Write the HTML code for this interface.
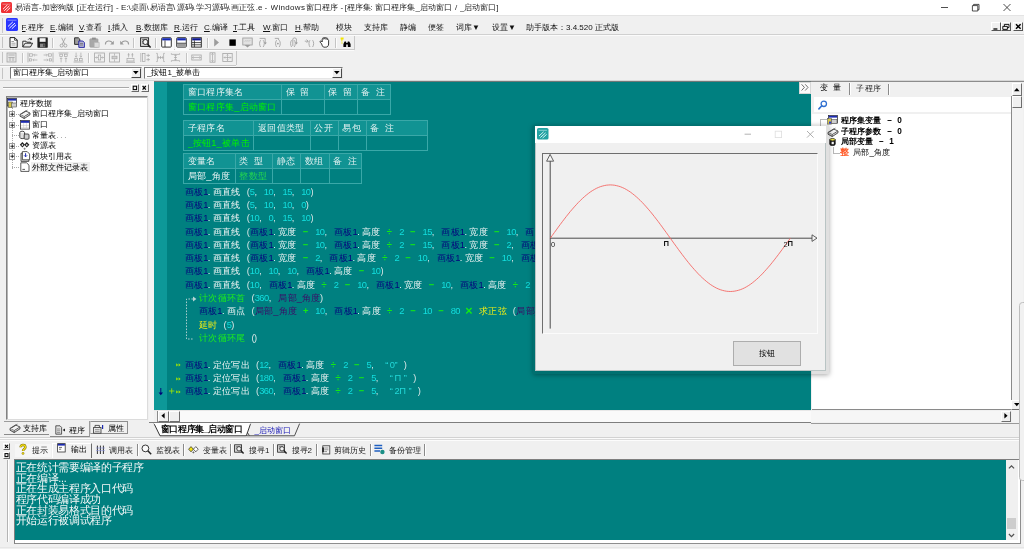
<!DOCTYPE html>
<html>
<head>
<meta charset="utf-8">
<title>E IDE</title>
<style>
html,body{margin:0;padding:0;}
body{width:1024px;height:549px;overflow:hidden;position:relative;background:#f0f0f0;font-family:"Liberation Sans",sans-serif;font-size:8px;color:#000;}
body div,body svg{position:absolute;box-sizing:border-box;}
.t{white-space:nowrap;overflow:hidden;}
.c{white-space:pre;overflow:hidden;font-size:9.33px;line-height:13px;height:13px;}
.n{letter-spacing:-0.52px;}
.o{text-align:center;font-weight:bold;}
i{display:inline-block;width:1em;text-align:center;font-style:normal;}
svg{overflow:visible;}
#root{left:0;top:0;width:1024px;height:549px;overflow:hidden;will-change:transform;}
</style>
</head>
<body>
<div id="root">
<div style="left:0px;top:0px;width:1024px;height:15px;background:#ffffff;"></div>
<svg style="left:1px;top:2px;" width="11" height="11" viewBox="0 0 11 11"><rect x="0" y="0" width="11" height="11" rx="1.6" fill="#ee3236"/><path d="M2 7.2L6.5 2.8M3.2 8.8L8.4 3.8M5.4 9.3L9.2 5.6" stroke="#fff" stroke-width="0.9" fill="none"/><path d="M1.5 2.2H9.5" stroke="#f7a0a2" stroke-width="0.7"/></svg>
<div class="t" style="left:15px;top:1.0px;font-size:8px;line-height:13px;height:13px;color:#1a1a1a;width:60px;"><i>易</i><i>语</i><i>言</i>-<i>加</i><i>密</i><i>狗</i><i>版</i></div>
<div class="t" style="left:76.4px;top:1.0px;font-size:8px;line-height:13px;height:13px;color:#1a1a1a;width:38px;">[<i>正</i><i>在</i><i>运</i><i>行</i>]</div>
<div class="t" style="left:116px;top:1.0px;font-size:8px;line-height:13px;height:13px;color:#1a1a1a;width:4px;">-</div>
<div class="t" style="left:121px;top:1.0px;font-size:8px;line-height:13px;height:13px;color:#1a1a1a;width:11px;">E:\</div>
<div class="t" style="left:131.2px;top:1.0px;font-size:8px;line-height:13px;height:13px;color:#1a1a1a;width:17px;"><i>桌</i><i>面</i></div>
<div class="t" style="left:146.6px;top:1.0px;font-size:8px;line-height:13px;height:13px;color:#1a1a1a;width:4px;">\</div>
<div class="t" style="left:150.2px;top:1.0px;font-size:8px;line-height:13px;height:13px;color:#1a1a1a;width:25px;"><i>易</i><i>语</i><i>言</i></div>
<div class="t" style="left:173px;top:1.0px;font-size:8px;line-height:13px;height:13px;color:#1a1a1a;width:4px;">\</div>
<div class="t" style="left:176.6px;top:1.0px;font-size:8px;line-height:13px;height:13px;color:#1a1a1a;width:17px;"><i>源</i><i>码</i></div>
<div class="t" style="left:192.3px;top:1.0px;font-size:8px;line-height:13px;height:13px;color:#1a1a1a;width:4px;">\</div>
<div class="t" style="left:196.2px;top:1.0px;font-size:8px;line-height:13px;height:13px;color:#1a1a1a;width:33px;"><i>学</i><i>习</i><i>源</i><i>码</i></div>
<div class="t" style="left:227.6px;top:1.0px;font-size:8px;line-height:13px;height:13px;color:#1a1a1a;width:4px;">\</div>
<div class="t" style="left:231.4px;top:1.0px;font-size:8px;line-height:13px;height:13px;color:#1a1a1a;width:25px;"><i>画</i><i>正</i><i>弦</i></div>
<div class="t" style="left:255.8px;top:1.0px;font-size:8px;line-height:13px;height:13px;color:#1a1a1a;width:7px;">.e</div>
<div class="t" style="left:264.6px;top:1.0px;font-size:8px;line-height:13px;height:13px;color:#1a1a1a;width:4px;">-</div>
<div class="t" style="left:270.5px;top:1.0px;font-size:8px;line-height:13px;height:13px;color:#1a1a1a;width:36px;letter-spacing:0.33px;">Windows</div>
<div class="t" style="left:306px;top:1.0px;font-size:8px;line-height:13px;height:13px;color:#1a1a1a;width:33px;"><i>窗</i><i>口</i><i>程</i><i>序</i></div>
<div class="t" style="left:340.4px;top:1.0px;font-size:8px;line-height:13px;height:13px;color:#1a1a1a;width:4px;">-</div>
<div class="t" style="left:344.8px;top:1.0px;font-size:8px;line-height:13px;height:13px;color:#1a1a1a;width:3px;">[</div>
<div class="t" style="left:346.9px;top:1.0px;font-size:8px;line-height:13px;height:13px;color:#1a1a1a;width:25px;"><i>程</i><i>序</i><i>集</i></div>
<div class="t" style="left:370.6px;top:1.0px;font-size:8px;line-height:13px;height:13px;color:#1a1a1a;width:3px;">:</div>
<div class="t" style="left:375.4px;top:1.0px;font-size:8px;line-height:13px;height:13px;color:#1a1a1a;width:78px;"><i>窗</i><i>口</i><i>程</i><i>序</i><i>集</i>_<i>启</i><i>动</i><i>窗</i><i>口</i></div>
<div class="t" style="left:455px;top:1.0px;font-size:8px;line-height:13px;height:13px;color:#1a1a1a;width:4px;">/</div>
<div class="t" style="left:459.8px;top:1.0px;font-size:8px;line-height:13px;height:13px;color:#1a1a1a;width:40px;">_<i>启</i><i>动</i><i>窗</i><i>口</i>]</div>
<svg style="left:940px;top:3px;" width="80" height="10" viewBox="0 0 80 10"><path d="M1 4.5H8" stroke="#222" stroke-width="0.8"/><path d="M32.4 2.6H37.8V8H32.4Z M33.6 2.6V1.4H39V6.8H37.8" stroke="#222" stroke-width="0.8" fill="none" stroke-linejoin="round"/><path d="M63.5 1L70.5 8M70.5 1L63.5 8" stroke="#222" stroke-width="0.8"/></svg>
<div style="left:0px;top:15px;width:1024px;height:1px;background:#e4e4e4;"></div>
<div style="left:2px;top:18px;width:1px;height:15px;background:#c8c8c8;"></div>
<svg style="left:6px;top:18px;" width="12" height="13" viewBox="0 0 12 13"><rect x="0" y="0" width="12" height="13" rx="1.6" fill="#2a36ff"/><path d="M1.5 2.2H10.5" stroke="#9aa2ff" stroke-width="0.8"/><path d="M2 8.5L6.8 3.9M3.4 10.2L9 5M5.8 10.8L10 6.8" stroke="#fff" stroke-width="0.95" fill="none"/></svg>
<div class="t" style="left:21.5px;top:20.5px;font-size:8px;line-height:13px;height:13px;color:#111;width:23px;"><u>F</u>.<i>程</i><i>序</i></div>
<div class="t" style="left:50px;top:20.5px;font-size:8px;line-height:13px;height:13px;color:#111;width:23px;"><u>E</u>.<i>编</i><i>辑</i></div>
<div class="t" style="left:79px;top:20.5px;font-size:8px;line-height:13px;height:13px;color:#111;width:24px;"><u>V</u>.<i>查</i><i>看</i></div>
<div class="t" style="left:108px;top:20.5px;font-size:8px;line-height:13px;height:13px;color:#111;width:22px;"><u>I</u>.<i>插</i><i>入</i></div>
<div class="t" style="left:136px;top:20.5px;font-size:8px;line-height:13px;height:13px;color:#111;width:32.5px;"><u>B</u>.<i>数</i><i>据</i><i>库</i></div>
<div class="t" style="left:174px;top:20.5px;font-size:8px;line-height:13px;height:13px;color:#111;width:24px;"><u>R</u>.<i>运</i><i>行</i></div>
<div class="t" style="left:204px;top:20.5px;font-size:8px;line-height:13px;height:13px;color:#111;width:24px;"><u>C</u>.<i>编</i><i>译</i></div>
<div class="t" style="left:233px;top:20.5px;font-size:8px;line-height:13px;height:13px;color:#111;width:24px;"><u>T</u>.<i>工</i><i>具</i></div>
<div class="t" style="left:263px;top:20.5px;font-size:8px;line-height:13px;height:13px;color:#111;width:26.5px;"><u>W</u>.<i>窗</i><i>口</i></div>
<div class="t" style="left:295px;top:20.5px;font-size:8px;line-height:13px;height:13px;color:#111;width:25px;"><u>H</u>.<i>帮</i><i>助</i></div>
<div class="t" style="left:336px;top:20.5px;font-size:8px;line-height:13px;height:13px;color:#111;width:17px;"><i>模</i><i>块</i></div>
<div class="t" style="left:364px;top:20.5px;font-size:8px;line-height:13px;height:13px;color:#111;width:25px;"><i>支</i><i>持</i><i>库</i></div>
<div class="t" style="left:400px;top:20.5px;font-size:8px;line-height:13px;height:13px;color:#111;width:17px;"><i>静</i><i>编</i></div>
<div class="t" style="left:428px;top:20.5px;font-size:8px;line-height:13px;height:13px;color:#111;width:17px;"><i>便</i><i>签</i></div>
<div class="t" style="left:456px;top:20.5px;font-size:8px;line-height:13px;height:13px;color:#111;width:24px;"><i>词</i><i>库</i>▼</div>
<div class="t" style="left:492px;top:20.5px;font-size:8px;line-height:13px;height:13px;color:#111;width:24px;"><i>设</i><i>置</i>▼</div>
<div class="t" style="left:526px;top:20.5px;font-size:8px;line-height:13px;height:13px;color:#111;width:95px;"><i>助</i><i>手</i><i>版</i><i>本</i><i>：</i>3.4.520 <i>正</i><i>式</i><i>版</i></div>
<div style="left:991px;top:22.3px;width:9.9px;height:9.2px;background:#f0f0f0;border:0.6px solid #fff;border-right-color:#555;border-bottom-color:#555;"></div>
<div style="left:1001.2px;top:22.3px;width:9.9px;height:9.2px;background:#f0f0f0;border:0.6px solid #fff;border-right-color:#555;border-bottom-color:#555;"></div>
<div style="left:1013.4px;top:22.3px;width:9.9px;height:9.2px;background:#f0f0f0;border:0.6px solid #fff;border-right-color:#555;border-bottom-color:#555;"></div>
<svg style="left:991px;top:22.3px;" width="33" height="9" viewBox="0 0 33 9"><path d="M2.4 7H6.4" stroke="#000" stroke-width="1.3"/><path d="M11.8 4.4H16.4V7.4H11.8Z M13.4 4.2V2.4H18V5.6H16.6" stroke="#000" stroke-width="0.9" fill="none"/><path d="M25 2.2L29.6 6.8M29.6 2.2L25 6.8" stroke="#000" stroke-width="1.5"/></svg>
<div style="left:0px;top:34px;width:1024px;height:1px;background:#d0d0d0;"></div>
<div style="left:0px;top:35px;width:1024px;height:1px;background:#fbfbfb;"></div>
<div style="left:2px;top:37px;width:1px;height:11px;background:#c4c4c4;"></div>
<div style="left:0px;top:49px;width:354px;height:1px;background:#c8c8c8;"></div>
<div style="left:0px;top:50px;width:354px;height:1px;background:#fbfbfb;"></div>
<div style="left:353.5px;top:36px;width:1px;height:14px;background:#c8c8c8;"></div>
<div style="left:51.5px;top:37.5px;width:1px;height:10.5px;background:#c4c4c4;"></div>
<div style="left:52.5px;top:37.5px;width:1px;height:10.5px;background:#fcfcfc;"></div>
<div style="left:133px;top:37.5px;width:1px;height:10.5px;background:#c4c4c4;"></div>
<div style="left:134px;top:37.5px;width:1px;height:10.5px;background:#fcfcfc;"></div>
<div style="left:155px;top:37.5px;width:1px;height:10.5px;background:#c4c4c4;"></div>
<div style="left:156px;top:37.5px;width:1px;height:10.5px;background:#fcfcfc;"></div>
<div style="left:206.5px;top:37.5px;width:1px;height:10.5px;background:#c4c4c4;"></div>
<div style="left:207.5px;top:37.5px;width:1px;height:10.5px;background:#fcfcfc;"></div>
<div style="left:334.5px;top:37.5px;width:1px;height:10.5px;background:#c4c4c4;"></div>
<div style="left:335.5px;top:37.5px;width:1px;height:10.5px;background:#fcfcfc;"></div>
<div style="left:159.5px;top:36.5px;width:14.5px;height:13px;background:#fafafa;"></div>
<div style="left:174.5px;top:36.5px;width:14.5px;height:13px;background:#fafafa;"></div>
<svg style="left:8.0px;top:37.0px;" width="11" height="11" viewBox="0 0 11 11"><path d="M2 .6H6.8L9.2 3V10.4H2Z" fill="#fff" stroke="#1e1e1e" stroke-width="1"/><path d="M6.6 .6V3.2H9.2" fill="none" stroke="#1e1e1e" stroke-width=".8"/><path d="M3.4 4.5H6M3.4 6.2H7.6M3.4 8H7.6" stroke="#777" stroke-width=".7"/></svg>
<svg style="left:22.0px;top:37.0px;" width="11" height="11" viewBox="0 0 11 11"><path d="M.8 10V4.2H4L4.8 5.2H8.4V6.2" fill="#fff" stroke="#1e1e1e" stroke-width=".9"/><path d="M.8 10L3 6.2H10.6L8.4 10Z" fill="#e8e8e8" stroke="#1e1e1e" stroke-width=".9"/><path d="M6.2 2.6C7 1.2 8.4 1.2 9.4 2.2M9.6 .8V2.6H7.9" fill="none" stroke="#1e1e1e" stroke-width=".8"/></svg>
<svg style="left:37.0px;top:37.0px;" width="11" height="11" viewBox="0 0 11 11"><rect x=".8" y=".8" width="9.6" height="9.6" fill="#222" stroke="#1e1e1e" stroke-width=".6"/><rect x="2.6" y="1.2" width="6" height="3.6" fill="#f4f4f4"/><rect x="3" y="6.6" width="5.2" height="3.6" fill="#888"/><rect x="6.4" y="7.2" width="1.1" height="2.4" fill="#222"/></svg>
<svg style="left:58.0px;top:37.0px;" width="11" height="11" viewBox="0 0 11 11"><path d="M3.6 .8L6.6 7M7.4 .8L4.4 7" stroke="#9a9a9a" stroke-width=".8" fill="none"/><circle cx="3.6" cy="8.6" r="1.5" fill="none" stroke="#9a9a9a" stroke-width=".8"/><circle cx="7.4" cy="8.6" r="1.5" fill="none" stroke="#9a9a9a" stroke-width=".8"/></svg>
<svg style="left:73.5px;top:37.0px;" width="11" height="11" viewBox="0 0 11 11"><path d="M.6 .8H4.4L5.8 2.2V7.4H.6Z" fill="#9c9c9c" stroke="#1e1e1e" stroke-width=".9"/><path d="M4.8 4H8.8L10.4 5.6V10.4H4.8Z" fill="#b9b9d8" stroke="#1c1ca0" stroke-width=".9"/><path d="M6 6.4H9M6 8H9" stroke="#444" stroke-width=".6"/></svg>
<svg style="left:89.0px;top:37.0px;" width="11" height="11" viewBox="0 0 11 11"><rect x=".8" y="1.8" width="8.2" height="8.4" rx=".8" fill="#a8a8a8" stroke="#9a9a9a" stroke-width=".6"/><rect x="3" y=".6" width="3.8" height="2" fill="#8f8f8f"/><path d="M5.2 5.4H10.2V10.4H5.2Z" fill="#dcdcdc" stroke="#b0b0b0" stroke-width=".6"/></svg>
<svg style="left:104.0px;top:37.0px;" width="11" height="11" viewBox="0 0 11 11"><path d="M1.4 7.4C1.4 3.4 6.6 3 8.6 6" fill="none" stroke="#9a9a9a" stroke-width="1.1"/><path d="M9.8 3.8V7.4H6.2Z" fill="#9a9a9a"/></svg>
<svg style="left:119.0px;top:37.0px;" width="11" height="11" viewBox="0 0 11 11"><path d="M9.6 7.4C9.6 3.4 4.4 3 2.4 6" fill="none" stroke="#9a9a9a" stroke-width="1.1"/><path d="M1.2 3.8V7.4H4.8Z" fill="#9a9a9a"/></svg>
<svg style="left:139.5px;top:37.0px;" width="11" height="11" viewBox="0 0 11 11"><rect x=".6" y=".8" width="8" height="8.6" fill="#d6d6d6" stroke="#1e1e1e" stroke-width=".9"/><path d="M2 2.6H7M2 4.4H7M2 6.2H7" stroke="#555" stroke-width=".7"/><circle cx="5.4" cy="5" r="2.5" fill="#f3f3f3" stroke="#1e1e1e" stroke-width=".9"/><path d="M7.4 7L10.6 10.4" stroke="#1e1e1e" stroke-width="1.5"/></svg>
<svg style="left:161.0px;top:37.2px;" width="11" height="11" viewBox="0 0 11 11"><rect x=".7" y=".7" width="9.6" height="9.4" rx=".8" fill="#fff" stroke="#1e1e1e" stroke-width=".9"/><rect x="1.2" y="1.2" width="8.6" height="2.2" fill="#1428b4"/><path d="M4 3.4V10" stroke="#1e1e1e" stroke-width=".8"/></svg>
<svg style="left:176.0px;top:37.2px;" width="11" height="11" viewBox="0 0 11 11"><rect x=".7" y=".7" width="9.6" height="9.4" rx=".8" fill="#fff" stroke="#1e1e1e" stroke-width=".9"/><rect x="1.2" y="1.2" width="8.6" height="2.2" fill="#1428b4"/><rect x="1.2" y="6.4" width="8.6" height="3.2" fill="#9c9c9c"/><path d="M1 6.2H10" stroke="#1e1e1e" stroke-width=".7"/></svg>
<svg style="left:191.0px;top:37.0px;" width="11" height="11" viewBox="0 0 11 11"><rect x=".7" y=".7" width="9.6" height="9.4" fill="#fff" stroke="#1e1e1e" stroke-width=".9"/><rect x="1.2" y="1.2" width="8.6" height="2.2" fill="#0c1690"/><path d="M3.4 3.4V10M1 5.6H10M1 7.8H10" stroke="#1e1e1e" stroke-width=".8"/></svg>
<svg style="left:211.0px;top:37.0px;" width="11" height="11" viewBox="0 0 11 11"><path d="M3.2 1.4L8 5.5L3.2 9.6Z" fill="#9c9c9c"/></svg>
<svg style="left:226.5px;top:37.0px;" width="11" height="11" viewBox="0 0 11 11"><rect x="2.4" y="2.4" width="6.4" height="6.4" fill="#000"/></svg>
<svg style="left:242.0px;top:37.0px;" width="11" height="11" viewBox="0 0 11 11"><rect x=".8" y="1" width="9.4" height="7" fill="#e2e2e2" stroke="#9a9a9a" stroke-width=".8"/><path d="M3 4.4L4 3.4M5 4.4L6 3.4M7 4.4L8 3.4" stroke="#9a9a9a" stroke-width=".7"/><path d="M2.6 8L5.5 10.6L8.4 8Z" fill="#9a9a9a"/></svg>
<svg style="left:257.0px;top:37.0px;" width="11" height="11" viewBox="0 0 11 11"><path d="M3.6 3.2C2.2 5 2.2 8 3.6 10M6.2 3.2C7.6 5 7.6 8 6.2 10" fill="none" stroke="#9a9a9a" stroke-width=".8"/><path d="M2.6 1.4H8.2V6" fill="none" stroke="#9a9a9a" stroke-width=".8"/><path d="M6.8 5.4H9.8L8.3 7.6Z" fill="#9a9a9a"/></svg>
<svg style="left:272.5px;top:37.0px;" width="11" height="11" viewBox="0 0 11 11"><path d="M3.6 3.2C2.2 5 2.2 8 3.6 10M6.2 3.2C7.6 5 7.6 8 6.2 10" fill="none" stroke="#9a9a9a" stroke-width=".8"/><path d="M1.8 1.4H5.6V3" fill="none" stroke="#9a9a9a" stroke-width=".8"/><circle cx="4.9" cy="6.6" r=".9" fill="#9a9a9a"/></svg>
<svg style="left:288.0px;top:37.0px;" width="11" height="11" viewBox="0 0 11 11"><path d="M3.6 3.2C2.2 5 2.2 8 3.6 10M6.2 3.2C7.6 5 7.6 8 6.2 10" fill="none" stroke="#9a9a9a" stroke-width=".8"/><path d="M4.8 9V2C4.8 .6 8.4 .6 8.4 2V6" fill="none" stroke="#9a9a9a" stroke-width=".8"/><path d="M6.9 5.4H9.9L8.4 7.6Z" fill="#9a9a9a"/></svg>
<svg style="left:303.5px;top:37.0px;" width="11" height="11" viewBox="0 0 11 11"><path d="M6 3.2C4.6 5 4.6 8 6 10M8.6 3.2C10 5 10 8 8.6 10" fill="none" stroke="#9a9a9a" stroke-width=".8"/><path d="M.8 4.2H4.2M2.6 2.6L4.2 4.2L2.6 5.8" fill="none" stroke="#9a9a9a" stroke-width=".8"/></svg>
<svg style="left:319.0px;top:37.0px;" width="11" height="11" viewBox="0 0 11 11"><path d="M2.6 6.8L1.2 5.2C.6 4.4 1.6 3.6 2.4 4.2L3.2 5V2.4C3.2 1.4 4.4 1.4 4.6 2.2C4.8 1 6.2 1 6.4 2.2C6.8 1.2 8 1.4 8 2.6C8.6 2 9.6 2.4 9.6 3.4V7C9.6 9 8.4 10.2 6.4 10.2H5.2C3.8 10.2 3.2 8.8 2.6 6.8Z" fill="#fff" stroke="#1e1e1e" stroke-width=".9"/><path d="M3.4 1.8C4.6 .2 7.8 .2 8.8 2" fill="none" stroke="#666" stroke-width="1.4"/></svg>
<svg style="left:339.7px;top:37.3px;" width="11" height="11" viewBox="0 0 11 11"><path d="M.6 .6H3.6V2.6H2.4V4.4H1.4V2.6H.6Z" fill="#f2e500"/><rect x="1.4" y="5.4" width="1.2" height="1.2" fill="#f2e500"/><path d="M3.4 10V7L4.6 4.4H6L6.4 6H7.4L7.8 4.4H9.2L10.6 7V10H7.8V7.6H6.2V10Z" fill="#000"/></svg>
<div style="left:2px;top:52px;width:1px;height:11px;background:#c4c4c4;"></div>
<div style="left:0px;top:64.5px;width:236px;height:1px;background:#c8c8c8;"></div>
<div style="left:0px;top:65.5px;width:236px;height:1px;background:#fbfbfb;"></div>
<div style="left:235.5px;top:51px;width:1px;height:14px;background:#c8c8c8;"></div>
<div style="left:21.5px;top:52.5px;width:1px;height:10.5px;background:#c4c4c4;"></div>
<div style="left:22.5px;top:52.5px;width:1px;height:10.5px;background:#fcfcfc;"></div>
<div style="left:88px;top:52.5px;width:1px;height:10.5px;background:#c4c4c4;"></div>
<div style="left:89px;top:52.5px;width:1px;height:10.5px;background:#fcfcfc;"></div>
<div style="left:186px;top:52.5px;width:1px;height:10.5px;background:#c4c4c4;"></div>
<div style="left:187px;top:52.5px;width:1px;height:10.5px;background:#fcfcfc;"></div>
<svg style="left:5.5px;top:52.0px;" width="11" height="11" viewBox="0 0 11 11"><rect x="1" y="1" width="9" height="9" fill="#e4e4e4" stroke="#a6a6a6" stroke-width=".8"/><path d="M2.4 3H8.6M2.4 5.5H8.6M4 5.5V9M7 5.5V9" stroke="#a6a6a6" stroke-width=".8"/></svg>
<svg style="left:26.5px;top:52.0px;" width="11" height="11" viewBox="0 0 11 11"><path d="M1 .6V10.4" stroke="#a6a6a6" stroke-width=".8"/><rect x="2.4" y="1.8" width="3" height="2.4" fill="none" stroke="#a6a6a6" stroke-width=".7"/><rect x="2.4" y="6.8" width="2.2" height="2.2" fill="none" stroke="#a6a6a6" stroke-width=".7"/><path d="M10.4 3H6.6M7.8 1.8L6.6 3L7.8 4.2M10.4 8H5.8M7 6.8L5.8 8L7 9.2" stroke="#a6a6a6" stroke-width=".7" fill="none"/></svg>
<svg style="left:42.5px;top:52.0px;" width="11" height="11" viewBox="0 0 11 11"><path d="M10 .6V10.4" stroke="#a6a6a6" stroke-width=".8"/><rect x="5.6" y="1.8" width="3" height="2.4" fill="none" stroke="#a6a6a6" stroke-width=".7"/><rect x="6.4" y="6.8" width="2.2" height="2.2" fill="none" stroke="#a6a6a6" stroke-width=".7"/><path d="M.6 3H4.4M3.2 1.8L4.4 3L3.2 4.2M.6 8H5.2M4 6.8L5.2 8L4 9.2" stroke="#a6a6a6" stroke-width=".7" fill="none"/></svg>
<svg style="left:58.0px;top:52.0px;" width="11" height="11" viewBox="0 0 11 11"><path d="M.6 1H10.4" stroke="#a6a6a6" stroke-width=".8"/><rect x="1.8" y="2.2" width="2.6" height="2.4" fill="none" stroke="#a6a6a6" stroke-width=".7"/><rect x="6.6" y="2.2" width="2.6" height="2.4" fill="none" stroke="#a6a6a6" stroke-width=".7"/><path d="M3.1 10.4V5.8M1.9 7L3.1 5.8L4.3 7M7.9 10.4V5.8M6.7 7L7.9 5.8L9.1 7" stroke="#a6a6a6" stroke-width=".7" fill="none"/></svg>
<svg style="left:73.0px;top:52.0px;" width="11" height="11" viewBox="0 0 11 11"><path d="M.6 10H10.4" stroke="#a6a6a6" stroke-width=".8"/><rect x="1.8" y="6.4" width="2.6" height="2.4" fill="none" stroke="#a6a6a6" stroke-width=".7"/><rect x="6.6" y="6.4" width="2.6" height="2.4" fill="none" stroke="#a6a6a6" stroke-width=".7"/><path d="M3.1 .6V5.2M1.9 4L3.1 5.2L4.3 4M7.9 .6V5.2M6.7 4L7.9 5.2L9.1 4" stroke="#a6a6a6" stroke-width=".7" fill="none"/></svg>
<svg style="left:94.0px;top:52.0px;" width="11" height="11" viewBox="0 0 11 11"><rect x=".6" y="1" width="9.8" height="9" fill="none" stroke="#a6a6a6" stroke-width=".8"/><rect x="4.3" y="3" width="2.4" height="5" fill="none" stroke="#a6a6a6" stroke-width=".7"/><path d="M1 5.5H3.6M2.6 4.5L3.6 5.5L2.6 6.5M10 5.5H7.4M8.4 4.5L7.4 5.5L8.4 6.5" stroke="#a6a6a6" stroke-width=".7" fill="none"/></svg>
<svg style="left:109.0px;top:52.0px;" width="11" height="11" viewBox="0 0 11 11"><rect x=".6" y="1" width="9.8" height="9" fill="none" stroke="#a6a6a6" stroke-width=".8"/><rect x="3" y="4.2" width="5" height="2.6" fill="#d0d0d0" stroke="#a6a6a6" stroke-width=".7"/><path d="M5.5 1.4V3.6M5.5 9.6V7.4" stroke="#a6a6a6" stroke-width=".7" fill="none"/></svg>
<svg style="left:124.5px;top:52.0px;" width="11" height="11" viewBox="0 0 11 11"><path d="M1 10.2H10" stroke="#a6a6a6" stroke-width=".9"/><rect x="2" y="6.4" width="7" height="2.6" fill="none" stroke="#a6a6a6" stroke-width=".7"/><path d="M3.6 1V5.4M7.4 1V5.4M2.6 2.8H4.6M6.4 2.8H8.4" stroke="#a6a6a6" stroke-width=".7"/></svg>
<svg style="left:139.5px;top:52.0px;" width="11" height="11" viewBox="0 0 11 11"><rect x="2.4" y="1.6" width="2.6" height="8" fill="none" stroke="#a6a6a6" stroke-width=".7"/><path d="M.8 1V10M6.4 3.4H10M8.2 1.8V5M6.4 7.6H10M8.2 6V9.2" stroke="#a6a6a6" stroke-width=".7"/></svg>
<svg style="left:155.0px;top:52.0px;" width="11" height="11" viewBox="0 0 11 11"><path d="M1.2 1.4H2.4V9.6H1.2M9.8 1.4H8.6V9.6H9.8M2.8 5.5H8.2M4 4.4L2.8 5.5L4 6.6M7 4.4L8.2 5.5L7 6.6M5.5 4V7" stroke="#a6a6a6" stroke-width=".7" fill="none"/></svg>
<svg style="left:170.0px;top:52.0px;" width="11" height="11" viewBox="0 0 11 11"><path d="M1.4 1.2V2.4H9.6V1.2M1.4 9.8V8.6H9.6V9.8M5.5 2.8V8.2M4.4 4L5.5 2.8L6.6 4M4.4 7L5.5 8.2L6.6 7M4 5.5H7" stroke="#a6a6a6" stroke-width=".7" fill="none"/></svg>
<svg style="left:191.0px;top:52.0px;" width="11" height="11" viewBox="0 0 11 11"><rect x=".8" y="3" width="9.4" height="5" fill="none" stroke="#a6a6a6" stroke-width=".8"/><path d="M1.4 5.5H9.6M2.6 4.4L1.4 5.5L2.6 6.6M8.4 4.4L9.6 5.5L8.4 6.6" stroke="#a6a6a6" stroke-width=".7" fill="none"/></svg>
<svg style="left:206.5px;top:52.0px;" width="11" height="11" viewBox="0 0 11 11"><rect x="3" y=".8" width="5" height="9.4" fill="none" stroke="#a6a6a6" stroke-width=".8"/><path d="M5.5 1.4V9.6M4.4 2.6L5.5 1.4L6.6 2.6M4.4 8.4L5.5 9.6L6.6 8.4" stroke="#a6a6a6" stroke-width=".7" fill="none"/></svg>
<svg style="left:222.0px;top:52.0px;" width="11" height="11" viewBox="0 0 11 11"><rect x=".8" y="1.4" width="9.4" height="8.2" fill="none" stroke="#a6a6a6" stroke-width=".8"/><path d="M2 5.5H9M3 4.5L2 5.5L3 6.5M8 4.5L9 5.5L8 6.5M5.5 2.4V8.6M4.5 3.4L5.5 2.4L6.5 3.4M4.5 7.6L5.5 8.6L6.5 7.6" stroke="#a6a6a6" stroke-width=".7" fill="none"/></svg>
<div style="left:2px;top:67.5px;width:1px;height:11px;background:#c4c4c4;"></div>
<div style="left:9.5px;top:66.5px;width:132.5px;height:12.5px;background:#ffffff;border:1px solid #7a7a7a;border-right-color:#e6e6e6;border-bottom-color:#e6e6e6;"></div>
<div style="left:130.5px;top:67.5px;width:10.5px;height:10.5px;background:#efefef;border:0.7px solid #fff;border-right-color:#4a4a4a;border-bottom-color:#4a4a4a;"></div>
<svg style="left:132.9px;top:71.3px;" width="6" height="4" viewBox="0 0 6 4"><path d="M0 0H5.6L2.8 3.2Z" fill="#000"/></svg>
<div class="t" style="left:12.5px;top:66.3px;font-size:8px;line-height:13px;height:13px;color:#000;width:116.5px;"><i>窗</i><i>口</i><i>程</i><i>序</i><i>集</i>_<i>启</i><i>动</i><i>窗</i><i>口</i></div>
<div style="left:144px;top:66.5px;width:199px;height:12.5px;background:#ffffff;border:1px solid #7a7a7a;border-right-color:#e6e6e6;border-bottom-color:#e6e6e6;"></div>
<div style="left:331.5px;top:67.5px;width:10.5px;height:10.5px;background:#efefef;border:0.7px solid #fff;border-right-color:#4a4a4a;border-bottom-color:#4a4a4a;"></div>
<svg style="left:333.9px;top:71.3px;" width="6" height="4" viewBox="0 0 6 4"><path d="M0 0H5.6L2.8 3.2Z" fill="#000"/></svg>
<div class="t" style="left:147px;top:66.3px;font-size:8px;line-height:13px;height:13px;color:#000;width:183px;">_<i>按</i><i>钮</i>1_<i>被</i><i>单</i><i>击</i></div>
<div style="left:0px;top:79.5px;width:1024px;height:1px;background:#d6d6d6;"></div>
<div style="left:3px;top:86.5px;width:126px;height:1px;background:#a8a8a8;"></div>
<div style="left:3px;top:87.5px;width:126px;height:1px;background:#ffffff;"></div>
<div style="left:131px;top:83.5px;width:8px;height:8px;background:#f0f0f0;border:0.6px solid #fff;border-right-color:#6a6a6a;border-bottom-color:#6a6a6a;"></div>
<div style="left:140.5px;top:83.5px;width:8px;height:8px;background:#f0f0f0;border:0.6px solid #fff;border-right-color:#6a6a6a;border-bottom-color:#6a6a6a;"></div>
<svg style="left:131px;top:83.5px;" width="18" height="8" viewBox="0 0 18 8"><rect x="2.2" y="2.2" width="3.4" height="3.4" fill="none" stroke="#000" stroke-width="1"/><path d="M11.6 2L14.8 5.6M14.8 2L11.6 5.6" stroke="#000" stroke-width="1.2"/></svg>
<div style="left:5.5px;top:96px;width:142.5px;height:324px;background:#ffffff;border:1px solid #828282;border-right-color:#dcdcdc;border-bottom-color:#dcdcdc;"></div>
<div style="left:6.5px;top:97px;width:140.5px;height:1px;background:#b4b4b4;"></div>
<div style="left:6.5px;top:97px;width:1px;height:322px;background:#b4b4b4;"></div>
<div style="left:148.5px;top:80.5px;width:5px;height:342px;background:#f4f4f4;"></div>
<div style="left:11.8px;top:106px;width:1px;height:63px;border-left:1px dotted #a8a8a8;"></div>
<div style="left:12.3px;top:113.5px;width:7px;height:1px;border-top:1px dotted #a8a8a8;"></div>
<div style="left:12.3px;top:124.5px;width:7px;height:1px;border-top:1px dotted #a8a8a8;"></div>
<div style="left:12.3px;top:135px;width:7px;height:1px;border-top:1px dotted #a8a8a8;"></div>
<div style="left:12.3px;top:145.5px;width:7px;height:1px;border-top:1px dotted #a8a8a8;"></div>
<div style="left:12.3px;top:156px;width:7px;height:1px;border-top:1px dotted #a8a8a8;"></div>
<div style="left:12.3px;top:166.5px;width:7px;height:1px;border-top:1px dotted #a8a8a8;"></div>
<div style="left:8.8px;top:110.7px;width:6.5px;height:6.5px;background:#fff;border:0.8px solid #9e9e9e;"></div>
<svg style="left:8.8px;top:110.7px;" width="6.5" height="6.5" viewBox="0 0 6.5 6.5"><path d="M1.4 3.25H5.1M3.25 1.4V5.1" stroke="#000" stroke-width=".8"/></svg>
<div style="left:8.8px;top:121.7px;width:6.5px;height:6.5px;background:#fff;border:0.8px solid #9e9e9e;"></div>
<svg style="left:8.8px;top:121.7px;" width="6.5" height="6.5" viewBox="0 0 6.5 6.5"><path d="M1.4 3.25H5.1M3.25 1.4V5.1" stroke="#000" stroke-width=".8"/></svg>
<div style="left:8.8px;top:142.7px;width:6.5px;height:6.5px;background:#fff;border:0.8px solid #9e9e9e;"></div>
<svg style="left:8.8px;top:142.7px;" width="6.5" height="6.5" viewBox="0 0 6.5 6.5"><path d="M1.4 3.25H5.1M3.25 1.4V5.1" stroke="#000" stroke-width=".8"/></svg>
<div style="left:8.8px;top:153.2px;width:6.5px;height:6.5px;background:#fff;border:0.8px solid #9e9e9e;"></div>
<svg style="left:8.8px;top:153.2px;" width="6.5" height="6.5" viewBox="0 0 6.5 6.5"><path d="M1.4 3.25H5.1M3.25 1.4V5.1" stroke="#000" stroke-width=".8"/></svg>
<svg style="left:7.2px;top:97.5px;" width="11" height="11" viewBox="0 0 11 11"><rect x=".5" y=".5" width="9" height="7.5" fill="#fff" stroke="#333" stroke-width=".8"/><rect x=".8" y=".8" width="8.4" height="1.8" fill="#1c2ab0"/><rect x="1.4" y="4" width="4" height="5.5" fill="#d6c84a" stroke="#555" stroke-width=".6"/><rect x="4.6" y="5" width="5" height="4" fill="#cfcfcf" stroke="#555" stroke-width=".6"/></svg>
<svg style="left:19.3px;top:109px;" width="12" height="10" viewBox="0 0 12 10"><path d="M1 5.4L6.6 2L11 4L5.2 7.6Z" fill="#f4f4f4" stroke="#333" stroke-width=".8"/><path d="M1 5.4V7.2L5.2 9.6V7.6M5.2 9.6L11 5.8V4" fill="#bdbdbd" stroke="#333" stroke-width=".8"/><path d="M3 4.6L8.4 1.2" stroke="#333" stroke-width=".7"/></svg>
<svg style="left:19.8px;top:119.5px;" width="10" height="10" viewBox="0 0 10 10"><rect x=".5" y=".5" width="9" height="8.6" fill="#fff" stroke="#333" stroke-width=".8"/><rect x=".8" y=".8" width="8.4" height="2" fill="#1c2ab0"/><path d="M1 5.4H9M1 7.4H9M3.6 3V9M6.4 3V9" stroke="#c4c4c4" stroke-width=".5"/></svg>
<svg style="left:19.3px;top:130px;" width="11" height="10" viewBox="0 0 11 10"><ellipse cx="3.2" cy="2.8" rx="2.4" ry="1.6" fill="#fff" stroke="#222" stroke-width=".8"/><path d="M.8 2.8V7.4C.8 9 5.6 9 5.6 7.4V2.8" fill="#e0e0e0" stroke="#222" stroke-width=".8"/><rect x="5.2" y="4" width="4.8" height="5.2" rx="1" fill="#cfcfcf" stroke="#222" stroke-width=".8"/></svg>
<svg style="left:19.3px;top:141px;" width="11" height="9" viewBox="0 0 11 9"><path d="M3.4 1L6 3.8L3.4 6.6L.8 3.8Z" fill="#222"/><path d="M7.8 1L10.4 3.8L7.8 6.6L5.2 3.8Z" fill="#222"/><path d="M3.4 3L4.4 4L3.4 5L2.4 4ZM7.8 3L8.8 4L7.8 5L6.8 4Z" fill="#fff"/><path d="M5.6 6.4L6.8 7.8L5.6 9L4.4 7.8Z" fill="#8a8a8a"/></svg>
<svg style="left:19.8px;top:150.5px;" width="10" height="11" viewBox="0 0 10 11"><path d="M1 2.2H6.4L8.8 4.6V10.4H1Z" fill="#d8d8d8" stroke="#333" stroke-width=".8"/><path d="M2.4 .6H7.2L9.6 3V8.8H2.4Z" fill="#fff" stroke="#333" stroke-width=".8"/><path d="M5.6 2.2V5.6M4.2 4.4L5.6 5.8L7 4.4" stroke="#1c2ab0" stroke-width="1" fill="none"/></svg>
<svg style="left:19.8px;top:161.5px;" width="10" height="10" viewBox="0 0 10 10"><path d="M.8 .8H6.6L9 3.2V9.4H.8Z" fill="#fff" stroke="#333" stroke-width=".8"/><path d="M2.4 7.4H5" stroke="#333" stroke-width=".8"/></svg>
<div class="t" style="left:19.8px;top:96.5px;font-size:8px;line-height:13px;height:13px;color:#000;width:34px;"><i>程</i><i>序</i><i>数</i><i>据</i></div>
<div class="t" style="left:32.3px;top:107.3px;font-size:8px;line-height:13px;height:13px;color:#000;width:78px;"><i>窗</i><i>口</i><i>程</i><i>序</i><i>集</i>_<i>启</i><i>动</i><i>窗</i><i>口</i></div>
<div class="t" style="left:32.3px;top:118.1px;font-size:8px;line-height:13px;height:13px;color:#000;width:18px;"><i>窗</i><i>口</i></div>
<div class="t" style="left:32.3px;top:128.7px;font-size:8px;line-height:13px;height:13px;color:#000;width:40px;"><i>常</i><i>量</i><i>表</i><span style="letter-spacing:1.7px;color:#777">...</span></div>
<div class="t" style="left:32.3px;top:139.3px;font-size:8px;line-height:13px;height:13px;color:#000;width:26px;"><i>资</i><i>源</i><i>表</i></div>
<div class="t" style="left:32.3px;top:149.9px;font-size:8px;line-height:13px;height:13px;color:#000;width:42px;"><i>模</i><i>块</i><i>引</i><i>用</i><i>表</i></div>
<div style="left:31.3px;top:161.6px;width:59px;height:10.6px;background:#f0f0f0;"></div>
<div class="t" style="left:32.3px;top:160.5px;font-size:8px;line-height:13px;height:13px;color:#000;width:58px;"><i>外</i><i>部</i><i>文</i><i>件</i><i>记</i><i>录</i><i>表</i></div>
<div style="left:3.5px;top:421.2px;width:45.5px;height:13.4px;background:#f0f0f0;border-top:1px solid #9c9c9c;border-bottom:1px solid #8a8a8a;"></div>
<div style="left:90.2px;top:421.2px;width:37.4px;height:13.2px;background:#f0f0f0;border:1px solid #8e8e8e;border-left-color:#d0d0d0;"></div>
<div style="left:50px;top:421.2px;width:39.5px;height:15.4px;background:#f0f0f0;border-bottom:1.4px solid #8a8a8a;border-right:1px solid #9a9a9a;"></div>
<svg style="left:8.5px;top:423px;" width="12" height="10" viewBox="0 0 12 10"><path d="M1 5.4L6.6 2L11 4L5.2 7.6Z" fill="#f4f4f4" stroke="#333" stroke-width=".8"/><path d="M1 5.4V7.2L5.2 9.6V7.6M5.2 9.6L11 5.8V4" fill="#bdbdbd" stroke="#333" stroke-width=".8"/><path d="M3 4.6L8.4 1.2" stroke="#333" stroke-width=".7"/></svg>
<div class="t" style="left:22.5px;top:421.7px;font-size:8px;line-height:13px;height:13px;color:#000;width:26px;"><i>支</i><i>持</i><i>库</i></div>
<svg style="left:54.5px;top:425px;" width="11" height="10" viewBox="0 0 11 10"><path d="M.8 .8H5L6.6 2.4V9.2H.8Z" fill="#e4e4e4" stroke="#333" stroke-width=".8"/><path d="M2 4H5.2M2 5.8H5.2M2 7.6H5.2" stroke="#555" stroke-width=".6"/><path d="M10 3.6L7.6 5L10 6.4Z" fill="#222"/></svg>
<div class="t" style="left:68.5px;top:423.8px;font-size:8px;line-height:13px;height:13px;color:#000;width:18px;"><i>程</i><i>序</i></div>
<svg style="left:93px;top:423.5px;" width="11" height="10" viewBox="0 0 11 10"><rect x=".6" y="3.4" width="7.4" height="5.8" fill="#e6e6e6" stroke="#333" stroke-width=".8"/><path d="M2 3.2V1.4H6.4V3.2" fill="none" stroke="#333" stroke-width=".8"/><path d="M2 5.6H6.6M2 7.4H6.6" stroke="#666" stroke-width=".6"/><path d="M9.6 1V5" stroke="#1c2ab0" stroke-width="1.2"/></svg>
<div class="t" style="left:107.5px;top:421.7px;font-size:8px;line-height:13px;height:13px;color:#000;width:18px;"><i>属</i><i>性</i></div>
<div style="left:153.5px;top:81px;width:657.5px;height:329px;background:#008080;"></div>
<div style="left:153.5px;top:81px;width:13.5px;height:329px;background:#0d9898;"></div>
<div style="left:153.5px;top:80.5px;width:657.5px;height:1px;background:#6e7878;"></div>
<div style="left:183px;top:84px;width:207.60000000000002px;height:15.5px;background:#119393;"></div>
<div style="left:183px;top:84px;width:207.60000000000002px;height:31px;border:1px solid #3aa8a8;"></div>
<div style="left:183px;top:99px;width:207.60000000000002px;height:1px;background:#3aa8a8;"></div>
<div style="left:281.3px;top:84px;width:1px;height:31px;background:#3aa8a8;"></div>
<div style="left:323.6px;top:84px;width:1px;height:31px;background:#3aa8a8;"></div>
<div style="left:356.5px;top:84px;width:1px;height:31px;background:#3aa8a8;"></div>
<div class="t" style="left:187.5px;top:85.7px;font-size:9.33px;line-height:13px;height:13px;color:#e4f2f2;width:93.30000000000001px;word-spacing:2.6px;"><i>窗</i><i>口</i><i>程</i><i>序</i><i>集</i><i>名</i></div>
<div class="t" style="left:285.8px;top:85.7px;font-size:9.33px;line-height:13px;height:13px;color:#e4f2f2;width:37.30000000000001px;word-spacing:2.6px;"><i>保</i> <i>留</i></div>
<div class="t" style="left:328.1px;top:85.7px;font-size:9.33px;line-height:13px;height:13px;color:#e4f2f2;width:27.899999999999977px;word-spacing:2.6px;"><i>保</i> <i>留</i></div>
<div class="t" style="left:361.0px;top:85.7px;font-size:9.33px;line-height:13px;height:13px;color:#e4f2f2;width:28.100000000000023px;word-spacing:2.6px;"><i>备</i> <i>注</i></div>
<div class="t" style="left:187.5px;top:100.9px;font-size:9.33px;line-height:13px;height:13px;color:#00f400;width:93.30000000000001px;"><i>窗</i><i>口</i><i>程</i><i>序</i><i>集</i>_<i>启</i><i>动</i><i>窗</i><i>口</i></div>
<div style="left:183px;top:120.2px;width:244.8px;height:15.5px;background:#119393;"></div>
<div style="left:183px;top:120.2px;width:244.8px;height:31px;border:1px solid #3aa8a8;"></div>
<div style="left:183px;top:135.2px;width:244.8px;height:1px;background:#3aa8a8;"></div>
<div style="left:253.4px;top:120.2px;width:1px;height:31px;background:#3aa8a8;"></div>
<div style="left:309.8px;top:120.2px;width:1px;height:31px;background:#3aa8a8;"></div>
<div style="left:337.8px;top:120.2px;width:1px;height:31px;background:#3aa8a8;"></div>
<div style="left:365.8px;top:120.2px;width:1px;height:31px;background:#3aa8a8;"></div>
<div class="t" style="left:187.5px;top:121.9px;font-size:9.33px;line-height:13px;height:13px;color:#e4f2f2;width:65.4px;word-spacing:2.6px;"><i>子</i><i>程</i><i>序</i><i>名</i></div>
<div class="t" style="left:257.9px;top:121.9px;font-size:9.33px;line-height:13px;height:13px;color:#e4f2f2;width:51.400000000000006px;word-spacing:2.6px;"><i>返</i><i>回</i><i>值</i><i>类</i><i>型</i></div>
<div class="t" style="left:314.3px;top:121.9px;font-size:9.33px;line-height:13px;height:13px;color:#e4f2f2;width:23.0px;word-spacing:2.6px;"><i>公</i><i>开</i></div>
<div class="t" style="left:342.3px;top:121.9px;font-size:9.33px;line-height:13px;height:13px;color:#e4f2f2;width:23.0px;word-spacing:2.6px;"><i>易</i><i>包</i></div>
<div class="t" style="left:370.3px;top:121.9px;font-size:9.33px;line-height:13px;height:13px;color:#e4f2f2;width:56.0px;word-spacing:2.6px;"><i>备</i> <i>注</i></div>
<div class="t" style="left:187.5px;top:137.1px;font-size:9.33px;line-height:13px;height:13px;color:#00f400;width:65.4px;">_<i>按</i><i>钮</i>1_<i>被</i><i>单</i><i>击</i></div>
<div style="left:183px;top:153.3px;width:179.10000000000002px;height:15.5px;background:#119393;"></div>
<div style="left:183px;top:153.3px;width:179.10000000000002px;height:31px;border:1px solid #3aa8a8;"></div>
<div style="left:183px;top:168.3px;width:179.10000000000002px;height:1px;background:#3aa8a8;"></div>
<div style="left:234.7px;top:153.3px;width:1px;height:31px;background:#3aa8a8;"></div>
<div style="left:272.3px;top:153.3px;width:1px;height:31px;background:#3aa8a8;"></div>
<div style="left:300.4px;top:153.3px;width:1px;height:31px;background:#3aa8a8;"></div>
<div style="left:328.6px;top:153.3px;width:1px;height:31px;background:#3aa8a8;"></div>
<div class="t" style="left:187.5px;top:155.0px;font-size:9.33px;line-height:13px;height:13px;color:#e4f2f2;width:46.69999999999999px;word-spacing:2.6px;"><i>变</i><i>量</i><i>名</i></div>
<div class="t" style="left:239.2px;top:155.0px;font-size:9.33px;line-height:13px;height:13px;color:#e4f2f2;width:32.60000000000002px;word-spacing:2.6px;"><i>类</i> <i>型</i></div>
<div class="t" style="left:276.8px;top:155.0px;font-size:9.33px;line-height:13px;height:13px;color:#e4f2f2;width:23.099999999999966px;word-spacing:2.6px;"><i>静</i><i>态</i></div>
<div class="t" style="left:304.9px;top:155.0px;font-size:9.33px;line-height:13px;height:13px;color:#e4f2f2;width:23.200000000000045px;word-spacing:2.6px;"><i>数</i><i>组</i></div>
<div class="t" style="left:333.1px;top:155.0px;font-size:9.33px;line-height:13px;height:13px;color:#e4f2f2;width:27.5px;word-spacing:2.6px;"><i>备</i> <i>注</i></div>
<div class="t" style="left:187.5px;top:170.2px;font-size:9.33px;line-height:13px;height:13px;color:#eef6f6;width:46.69999999999999px;"><i>局</i><i>部</i>_<i>角</i><i>度</i></div>
<div class="t" style="left:239.2px;top:170.2px;font-size:9.33px;line-height:13px;height:13px;color:#22d552;text-decoration:underline dotted #22d552 0.6px;text-underline-offset:0.5px;width:32.60000000000002px;"><i>整</i><i>数</i><i>型</i></div>
<div class="c" style="left:184.5px;top:185.6px;width:24.53px;color:#04047c;"><i>画</i><i>板</i>1</div>
<div class="c n" style="left:207.83px;top:185.6px;width:5.87px;color:#f2f6f6;">.</div>
<div class="c" style="left:212.5px;top:185.6px;width:29.2px;color:#f2f6f6;"><i>画</i><i>直</i><i>线</i></div>
<div class="c n" style="left:246.67px;top:185.6px;width:5.87px;color:#d8e6e6;">(</div>
<div class="c n" style="left:249.83px;top:185.6px;width:5.87px;color:#12dede;">5</div>
<div class="c n" style="left:254.5px;top:185.6px;width:5.87px;color:#d8e6e6;">,</div>
<div class="c n" style="left:263.83px;top:185.6px;width:10.53px;color:#12dede;">10</div>
<div class="c n" style="left:273.17px;top:185.6px;width:5.87px;color:#d8e6e6;">,</div>
<div class="c n" style="left:282.5px;top:185.6px;width:10.53px;color:#12dede;">15</div>
<div class="c n" style="left:291.83px;top:185.6px;width:5.87px;color:#d8e6e6;">,</div>
<div class="c n" style="left:301.17px;top:185.6px;width:10.53px;color:#12dede;">10</div>
<div class="c n" style="left:310.5px;top:185.6px;width:5.87px;color:#d8e6e6;">)</div>
<div class="c" style="left:184.5px;top:198.91px;width:24.53px;color:#04047c;"><i>画</i><i>板</i>1</div>
<div class="c n" style="left:207.83px;top:198.91px;width:5.87px;color:#f2f6f6;">.</div>
<div class="c" style="left:212.5px;top:198.91px;width:29.2px;color:#f2f6f6;"><i>画</i><i>直</i><i>线</i></div>
<div class="c n" style="left:246.67px;top:198.91px;width:5.87px;color:#d8e6e6;">(</div>
<div class="c n" style="left:249.83px;top:198.91px;width:5.87px;color:#12dede;">5</div>
<div class="c n" style="left:254.5px;top:198.91px;width:5.87px;color:#d8e6e6;">,</div>
<div class="c n" style="left:263.83px;top:198.91px;width:10.53px;color:#12dede;">10</div>
<div class="c n" style="left:273.17px;top:198.91px;width:5.87px;color:#d8e6e6;">,</div>
<div class="c n" style="left:282.5px;top:198.91px;width:10.53px;color:#12dede;">10</div>
<div class="c n" style="left:291.83px;top:198.91px;width:5.87px;color:#d8e6e6;">,</div>
<div class="c n" style="left:301.17px;top:198.91px;width:5.87px;color:#12dede;">0</div>
<div class="c n" style="left:305.83px;top:198.91px;width:5.87px;color:#d8e6e6;">)</div>
<div class="c" style="left:184.5px;top:212.22px;width:24.53px;color:#04047c;"><i>画</i><i>板</i>1</div>
<div class="c n" style="left:207.83px;top:212.22px;width:5.87px;color:#f2f6f6;">.</div>
<div class="c" style="left:212.5px;top:212.22px;width:29.2px;color:#f2f6f6;"><i>画</i><i>直</i><i>线</i></div>
<div class="c n" style="left:246.67px;top:212.22px;width:5.87px;color:#d8e6e6;">(</div>
<div class="c n" style="left:249.83px;top:212.22px;width:10.53px;color:#12dede;">10</div>
<div class="c n" style="left:259.17px;top:212.22px;width:5.87px;color:#d8e6e6;">,</div>
<div class="c n" style="left:268.5px;top:212.22px;width:5.87px;color:#12dede;">0</div>
<div class="c n" style="left:273.17px;top:212.22px;width:5.87px;color:#d8e6e6;">,</div>
<div class="c n" style="left:282.5px;top:212.22px;width:10.53px;color:#12dede;">15</div>
<div class="c n" style="left:291.83px;top:212.22px;width:5.87px;color:#d8e6e6;">,</div>
<div class="c n" style="left:301.17px;top:212.22px;width:10.53px;color:#12dede;">10</div>
<div class="c n" style="left:310.5px;top:212.22px;width:5.87px;color:#d8e6e6;">)</div>
<div class="c" style="left:184.5px;top:225.53px;width:24.53px;color:#04047c;"><i>画</i><i>板</i>1</div>
<div class="c n" style="left:207.83px;top:225.53px;width:5.87px;color:#f2f6f6;">.</div>
<div class="c" style="left:212.5px;top:225.53px;width:29.2px;color:#f2f6f6;"><i>画</i><i>直</i><i>线</i></div>
<div class="c n" style="left:246.67px;top:225.53px;width:5.87px;color:#d8e6e6;">(</div>
<div class="c" style="left:249.83px;top:225.53px;width:24.53px;color:#04047c;"><i>画</i><i>板</i>1</div>
<div class="c n" style="left:273.17px;top:225.53px;width:5.87px;color:#f2f6f6;">.</div>
<div class="c" style="left:277.83px;top:225.53px;width:19.87px;color:#f2f6f6;"><i>宽</i><i>度</i></div>
<div class="c o" style="left:301.17px;top:225.53px;width:10.53px;color:#14ea14;margin-left:-1px;">−</div>
<div class="c n" style="left:315.17px;top:225.53px;width:10.53px;color:#12dede;">10</div>
<div class="c n" style="left:324.5px;top:225.53px;width:5.87px;color:#d8e6e6;">,</div>
<div class="c" style="left:333.83px;top:225.53px;width:24.53px;color:#04047c;"><i>画</i><i>板</i>1</div>
<div class="c n" style="left:357.17px;top:225.53px;width:5.87px;color:#f2f6f6;">.</div>
<div class="c" style="left:361.83px;top:225.53px;width:19.87px;color:#f2f6f6;"><i>高</i><i>度</i></div>
<div class="c o" style="left:385.17px;top:225.53px;width:10.53px;color:#14ea14;margin-left:-1px;">÷</div>
<div class="c n" style="left:399.17px;top:225.53px;width:5.87px;color:#12dede;">2</div>
<div class="c o" style="left:408.5px;top:225.53px;width:10.53px;color:#14ea14;margin-left:-1px;">−</div>
<div class="c n" style="left:422.5px;top:225.53px;width:10.53px;color:#12dede;">15</div>
<div class="c n" style="left:431.84px;top:225.53px;width:5.87px;color:#d8e6e6;">,</div>
<div class="c" style="left:441.17px;top:225.53px;width:24.53px;color:#04047c;"><i>画</i><i>板</i>1</div>
<div class="c n" style="left:464.5px;top:225.53px;width:5.87px;color:#f2f6f6;">.</div>
<div class="c" style="left:469.17px;top:225.53px;width:19.87px;color:#f2f6f6;"><i>宽</i><i>度</i></div>
<div class="c o" style="left:492.5px;top:225.53px;width:10.53px;color:#14ea14;margin-left:-1px;">−</div>
<div class="c n" style="left:506.5px;top:225.53px;width:10.53px;color:#12dede;">10</div>
<div class="c n" style="left:515.84px;top:225.53px;width:5.87px;color:#d8e6e6;">,</div>
<div class="c" style="left:525.17px;top:225.53px;width:24.53px;color:#04047c;"><i>画</i><i>板</i>1</div>
<div class="c n" style="left:548.5px;top:225.53px;width:5.87px;color:#f2f6f6;">.</div>
<div class="c" style="left:553.17px;top:225.53px;width:19.87px;color:#f2f6f6;"><i>高</i><i>度</i></div>
<div class="c o" style="left:576.5px;top:225.53px;width:10.53px;color:#14ea14;margin-left:-1px;">÷</div>
<div class="c n" style="left:590.5px;top:225.53px;width:5.87px;color:#12dede;">2</div>
<div class="c o" style="left:599.84px;top:225.53px;width:10.53px;color:#14ea14;margin-left:-1px;">−</div>
<div class="c n" style="left:613.84px;top:225.53px;width:5.87px;color:#12dede;">5</div>
<div class="c n" style="left:618.5px;top:225.53px;width:5.87px;color:#d8e6e6;">)</div>
<div class="c" style="left:184.5px;top:238.84px;width:24.53px;color:#04047c;"><i>画</i><i>板</i>1</div>
<div class="c n" style="left:207.83px;top:238.84px;width:5.87px;color:#f2f6f6;">.</div>
<div class="c" style="left:212.5px;top:238.84px;width:29.2px;color:#f2f6f6;"><i>画</i><i>直</i><i>线</i></div>
<div class="c n" style="left:246.67px;top:238.84px;width:5.87px;color:#d8e6e6;">(</div>
<div class="c" style="left:249.83px;top:238.84px;width:24.53px;color:#04047c;"><i>画</i><i>板</i>1</div>
<div class="c n" style="left:273.17px;top:238.84px;width:5.87px;color:#f2f6f6;">.</div>
<div class="c" style="left:277.83px;top:238.84px;width:19.87px;color:#f2f6f6;"><i>宽</i><i>度</i></div>
<div class="c o" style="left:301.17px;top:238.84px;width:10.53px;color:#14ea14;margin-left:-1px;">−</div>
<div class="c n" style="left:315.17px;top:238.84px;width:10.53px;color:#12dede;">10</div>
<div class="c n" style="left:324.5px;top:238.84px;width:5.87px;color:#d8e6e6;">,</div>
<div class="c" style="left:333.83px;top:238.84px;width:24.53px;color:#04047c;"><i>画</i><i>板</i>1</div>
<div class="c n" style="left:357.17px;top:238.84px;width:5.87px;color:#f2f6f6;">.</div>
<div class="c" style="left:361.83px;top:238.84px;width:19.87px;color:#f2f6f6;"><i>高</i><i>度</i></div>
<div class="c o" style="left:385.17px;top:238.84px;width:10.53px;color:#14ea14;margin-left:-1px;">÷</div>
<div class="c n" style="left:399.17px;top:238.84px;width:5.87px;color:#12dede;">2</div>
<div class="c o" style="left:408.5px;top:238.84px;width:10.53px;color:#14ea14;margin-left:-1px;">−</div>
<div class="c n" style="left:422.5px;top:238.84px;width:10.53px;color:#12dede;">15</div>
<div class="c n" style="left:431.84px;top:238.84px;width:5.87px;color:#d8e6e6;">,</div>
<div class="c" style="left:441.17px;top:238.84px;width:24.53px;color:#04047c;"><i>画</i><i>板</i>1</div>
<div class="c n" style="left:464.5px;top:238.84px;width:5.87px;color:#f2f6f6;">.</div>
<div class="c" style="left:469.17px;top:238.84px;width:19.87px;color:#f2f6f6;"><i>宽</i><i>度</i></div>
<div class="c o" style="left:492.5px;top:238.84px;width:10.53px;color:#14ea14;margin-left:-1px;">−</div>
<div class="c n" style="left:506.5px;top:238.84px;width:5.87px;color:#12dede;">2</div>
<div class="c n" style="left:511.17px;top:238.84px;width:5.87px;color:#d8e6e6;">,</div>
<div class="c" style="left:520.5px;top:238.84px;width:24.53px;color:#04047c;"><i>画</i><i>板</i>1</div>
<div class="c n" style="left:543.84px;top:238.84px;width:5.87px;color:#f2f6f6;">.</div>
<div class="c" style="left:548.5px;top:238.84px;width:19.87px;color:#f2f6f6;"><i>高</i><i>度</i></div>
<div class="c o" style="left:571.84px;top:238.84px;width:10.53px;color:#14ea14;margin-left:-1px;">÷</div>
<div class="c n" style="left:585.84px;top:238.84px;width:5.87px;color:#12dede;">2</div>
<div class="c o" style="left:595.17px;top:238.84px;width:10.53px;color:#14ea14;margin-left:-1px;">−</div>
<div class="c n" style="left:609.17px;top:238.84px;width:10.53px;color:#12dede;">10</div>
<div class="c n" style="left:618.5px;top:238.84px;width:5.87px;color:#d8e6e6;">)</div>
<div class="c" style="left:184.5px;top:252.15px;width:24.53px;color:#04047c;"><i>画</i><i>板</i>1</div>
<div class="c n" style="left:207.83px;top:252.15px;width:5.87px;color:#f2f6f6;">.</div>
<div class="c" style="left:212.5px;top:252.15px;width:29.2px;color:#f2f6f6;"><i>画</i><i>直</i><i>线</i></div>
<div class="c n" style="left:246.67px;top:252.15px;width:5.87px;color:#d8e6e6;">(</div>
<div class="c" style="left:249.83px;top:252.15px;width:24.53px;color:#04047c;"><i>画</i><i>板</i>1</div>
<div class="c n" style="left:273.17px;top:252.15px;width:5.87px;color:#f2f6f6;">.</div>
<div class="c" style="left:277.83px;top:252.15px;width:19.87px;color:#f2f6f6;"><i>宽</i><i>度</i></div>
<div class="c o" style="left:301.17px;top:252.15px;width:10.53px;color:#14ea14;margin-left:-1px;">−</div>
<div class="c n" style="left:315.17px;top:252.15px;width:5.87px;color:#12dede;">2</div>
<div class="c n" style="left:319.83px;top:252.15px;width:5.87px;color:#d8e6e6;">,</div>
<div class="c" style="left:329.17px;top:252.15px;width:24.53px;color:#04047c;"><i>画</i><i>板</i>1</div>
<div class="c n" style="left:352.5px;top:252.15px;width:5.87px;color:#f2f6f6;">.</div>
<div class="c" style="left:357.17px;top:252.15px;width:19.87px;color:#f2f6f6;"><i>高</i><i>度</i></div>
<div class="c o" style="left:380.5px;top:252.15px;width:10.53px;color:#14ea14;margin-left:-1px;">÷</div>
<div class="c n" style="left:394.5px;top:252.15px;width:5.87px;color:#12dede;">2</div>
<div class="c o" style="left:403.83px;top:252.15px;width:10.53px;color:#14ea14;margin-left:-1px;">−</div>
<div class="c n" style="left:417.83px;top:252.15px;width:10.53px;color:#12dede;">10</div>
<div class="c n" style="left:427.17px;top:252.15px;width:5.87px;color:#d8e6e6;">,</div>
<div class="c" style="left:436.5px;top:252.15px;width:24.53px;color:#04047c;"><i>画</i><i>板</i>1</div>
<div class="c n" style="left:459.84px;top:252.15px;width:5.87px;color:#f2f6f6;">.</div>
<div class="c" style="left:464.5px;top:252.15px;width:19.87px;color:#f2f6f6;"><i>宽</i><i>度</i></div>
<div class="c o" style="left:487.84px;top:252.15px;width:10.53px;color:#14ea14;margin-left:-1px;">−</div>
<div class="c n" style="left:501.84px;top:252.15px;width:10.53px;color:#12dede;">10</div>
<div class="c n" style="left:511.17px;top:252.15px;width:5.87px;color:#d8e6e6;">,</div>
<div class="c" style="left:520.5px;top:252.15px;width:24.53px;color:#04047c;"><i>画</i><i>板</i>1</div>
<div class="c n" style="left:543.84px;top:252.15px;width:5.87px;color:#f2f6f6;">.</div>
<div class="c" style="left:548.5px;top:252.15px;width:19.87px;color:#f2f6f6;"><i>高</i><i>度</i></div>
<div class="c o" style="left:571.84px;top:252.15px;width:10.53px;color:#14ea14;margin-left:-1px;">÷</div>
<div class="c n" style="left:585.84px;top:252.15px;width:5.87px;color:#12dede;">2</div>
<div class="c o" style="left:595.17px;top:252.15px;width:10.53px;color:#14ea14;margin-left:-1px;">−</div>
<div class="c n" style="left:609.17px;top:252.15px;width:5.87px;color:#12dede;">5</div>
<div class="c n" style="left:613.84px;top:252.15px;width:5.87px;color:#d8e6e6;">)</div>
<div class="c" style="left:184.5px;top:265.46px;width:24.53px;color:#04047c;"><i>画</i><i>板</i>1</div>
<div class="c n" style="left:207.83px;top:265.46px;width:5.87px;color:#f2f6f6;">.</div>
<div class="c" style="left:212.5px;top:265.46px;width:29.2px;color:#f2f6f6;"><i>画</i><i>直</i><i>线</i></div>
<div class="c n" style="left:246.67px;top:265.46px;width:5.87px;color:#d8e6e6;">(</div>
<div class="c n" style="left:249.83px;top:265.46px;width:10.53px;color:#12dede;">10</div>
<div class="c n" style="left:259.17px;top:265.46px;width:5.87px;color:#d8e6e6;">,</div>
<div class="c n" style="left:268.5px;top:265.46px;width:10.53px;color:#12dede;">10</div>
<div class="c n" style="left:277.83px;top:265.46px;width:5.87px;color:#d8e6e6;">,</div>
<div class="c n" style="left:287.17px;top:265.46px;width:10.53px;color:#12dede;">10</div>
<div class="c n" style="left:296.5px;top:265.46px;width:5.87px;color:#d8e6e6;">,</div>
<div class="c" style="left:305.83px;top:265.46px;width:24.53px;color:#04047c;"><i>画</i><i>板</i>1</div>
<div class="c n" style="left:329.17px;top:265.46px;width:5.87px;color:#f2f6f6;">.</div>
<div class="c" style="left:333.83px;top:265.46px;width:19.87px;color:#f2f6f6;"><i>高</i><i>度</i></div>
<div class="c o" style="left:357.17px;top:265.46px;width:10.53px;color:#14ea14;margin-left:-1px;">−</div>
<div class="c n" style="left:371.17px;top:265.46px;width:10.53px;color:#12dede;">10</div>
<div class="c n" style="left:380.5px;top:265.46px;width:5.87px;color:#d8e6e6;">)</div>
<div class="c" style="left:184.5px;top:278.77px;width:24.53px;color:#04047c;"><i>画</i><i>板</i>1</div>
<div class="c n" style="left:207.83px;top:278.77px;width:5.87px;color:#f2f6f6;">.</div>
<div class="c" style="left:212.5px;top:278.77px;width:29.2px;color:#f2f6f6;"><i>画</i><i>直</i><i>线</i></div>
<div class="c n" style="left:246.67px;top:278.77px;width:5.87px;color:#d8e6e6;">(</div>
<div class="c n" style="left:249.83px;top:278.77px;width:10.53px;color:#12dede;">10</div>
<div class="c n" style="left:259.17px;top:278.77px;width:5.87px;color:#d8e6e6;">,</div>
<div class="c" style="left:268.5px;top:278.77px;width:24.53px;color:#04047c;"><i>画</i><i>板</i>1</div>
<div class="c n" style="left:291.83px;top:278.77px;width:5.87px;color:#f2f6f6;">.</div>
<div class="c" style="left:296.5px;top:278.77px;width:19.87px;color:#f2f6f6;"><i>高</i><i>度</i></div>
<div class="c o" style="left:319.83px;top:278.77px;width:10.53px;color:#14ea14;margin-left:-1px;">÷</div>
<div class="c n" style="left:333.83px;top:278.77px;width:5.87px;color:#12dede;">2</div>
<div class="c o" style="left:343.17px;top:278.77px;width:10.53px;color:#14ea14;margin-left:-1px;">−</div>
<div class="c n" style="left:357.17px;top:278.77px;width:10.53px;color:#12dede;">10</div>
<div class="c n" style="left:366.5px;top:278.77px;width:5.87px;color:#d8e6e6;">,</div>
<div class="c" style="left:375.83px;top:278.77px;width:24.53px;color:#04047c;"><i>画</i><i>板</i>1</div>
<div class="c n" style="left:399.17px;top:278.77px;width:5.87px;color:#f2f6f6;">.</div>
<div class="c" style="left:403.83px;top:278.77px;width:19.87px;color:#f2f6f6;"><i>宽</i><i>度</i></div>
<div class="c o" style="left:427.17px;top:278.77px;width:10.53px;color:#14ea14;margin-left:-1px;">−</div>
<div class="c n" style="left:441.17px;top:278.77px;width:10.53px;color:#12dede;">10</div>
<div class="c n" style="left:450.5px;top:278.77px;width:5.87px;color:#d8e6e6;">,</div>
<div class="c" style="left:459.84px;top:278.77px;width:24.53px;color:#04047c;"><i>画</i><i>板</i>1</div>
<div class="c n" style="left:483.17px;top:278.77px;width:5.87px;color:#f2f6f6;">.</div>
<div class="c" style="left:487.84px;top:278.77px;width:19.87px;color:#f2f6f6;"><i>高</i><i>度</i></div>
<div class="c o" style="left:511.17px;top:278.77px;width:10.53px;color:#14ea14;margin-left:-1px;">÷</div>
<div class="c n" style="left:525.17px;top:278.77px;width:5.87px;color:#12dede;">2</div>
<div class="c o" style="left:534.5px;top:278.77px;width:10.53px;color:#14ea14;margin-left:-1px;">−</div>
<div class="c n" style="left:548.5px;top:278.77px;width:10.53px;color:#12dede;">10</div>
<div class="c n" style="left:557.84px;top:278.77px;width:5.87px;color:#d8e6e6;">)</div>
<div class="c" style="left:198.7px;top:292.08px;width:47.87px;color:#1cee1c;"><i>计</i><i>次</i><i>循</i><i>环</i><i>首</i></div>
<div class="c n" style="left:251.53px;top:292.08px;width:5.87px;color:#d8e6e6;">(</div>
<div class="c n" style="left:254.7px;top:292.08px;width:15.2px;color:#12dede;">360</div>
<div class="c n" style="left:268.7px;top:292.08px;width:5.87px;color:#d8e6e6;">,</div>
<div class="c" style="left:278.03px;top:292.08px;width:43.2px;color:#3c0a66;"><i>局</i><i>部</i>_<i>角</i><i>度</i></div>
<div class="c n" style="left:320.03px;top:292.08px;width:5.87px;color:#d8e6e6;">)</div>
<div class="c" style="left:198.7px;top:305.39px;width:24.53px;color:#04047c;"><i>画</i><i>板</i>1</div>
<div class="c n" style="left:222.03px;top:305.39px;width:5.87px;color:#f2f6f6;">.</div>
<div class="c" style="left:226.7px;top:305.39px;width:19.87px;color:#f2f6f6;"><i>画</i><i>点</i></div>
<div class="c n" style="left:251.53px;top:305.39px;width:5.87px;color:#d8e6e6;">(</div>
<div class="c" style="left:254.7px;top:305.39px;width:43.2px;color:#3c0a66;"><i>局</i><i>部</i>_<i>角</i><i>度</i></div>
<div class="c o" style="left:301.37px;top:305.39px;width:10.53px;color:#14ea14;margin-left:-1px;">+</div>
<div class="c n" style="left:315.37px;top:305.39px;width:10.53px;color:#12dede;">10</div>
<div class="c n" style="left:324.7px;top:305.39px;width:5.87px;color:#d8e6e6;">,</div>
<div class="c" style="left:334.03px;top:305.39px;width:24.53px;color:#04047c;"><i>画</i><i>板</i>1</div>
<div class="c n" style="left:357.37px;top:305.39px;width:5.87px;color:#f2f6f6;">.</div>
<div class="c" style="left:362.03px;top:305.39px;width:19.87px;color:#f2f6f6;"><i>高</i><i>度</i></div>
<div class="c o" style="left:385.37px;top:305.39px;width:10.53px;color:#14ea14;margin-left:-1px;">÷</div>
<div class="c n" style="left:399.37px;top:305.39px;width:5.87px;color:#12dede;">2</div>
<div class="c o" style="left:408.7px;top:305.39px;width:10.53px;color:#14ea14;margin-left:-1px;">−</div>
<div class="c n" style="left:422.7px;top:305.39px;width:10.53px;color:#12dede;">10</div>
<div class="c o" style="left:436.7px;top:305.39px;width:10.53px;color:#14ea14;margin-left:-1px;">−</div>
<div class="c n" style="left:450.7px;top:305.39px;width:10.53px;color:#12dede;">80</div>
<div class="c o" style="left:464.7px;top:305.39px;width:10.53px;color:#14ea14;margin-left:-1px;font-size:12.5px;">×</div>
<div class="c" style="left:478.7px;top:305.39px;width:29.2px;color:#f0ee14;"><i>求</i><i>正</i><i>弦</i></div>
<div class="c n" style="left:512.87px;top:305.39px;width:5.87px;color:#d8e6e6;">(</div>
<div class="c" style="left:516.04px;top:305.39px;width:43.2px;color:#3c0a66;"><i>局</i><i>部</i>_<i>角</i><i>度</i></div>
<div class="c o" style="left:562.7px;top:305.39px;width:10.53px;color:#14ea14;margin-left:-1px;font-size:12.5px;">×</div>
<div class="c n" style="left:576.7px;top:305.39px;width:19.87px;color:#12dede;">3.14</div>
<div class="c" style="left:198.7px;top:318.7px;width:19.87px;color:#f0ee14;"><i>延</i><i>时</i></div>
<div class="c n" style="left:223.53px;top:318.7px;width:5.87px;color:#d8e6e6;">(</div>
<div class="c n" style="left:226.7px;top:318.7px;width:5.87px;color:#12dede;">5</div>
<div class="c n" style="left:231.37px;top:318.7px;width:5.87px;color:#d8e6e6;">)</div>
<div class="c" style="left:198.7px;top:332.01px;width:47.87px;color:#1cee1c;"><i>计</i><i>次</i><i>循</i><i>环</i><i>尾</i></div>
<div class="c n" style="left:251.53px;top:332.01px;width:10.53px;color:#d8e6e6;">()</div>
<div class="c" style="left:184.5px;top:358.63px;width:24.53px;color:#04047c;"><i>画</i><i>板</i>1</div>
<div class="c n" style="left:207.83px;top:358.63px;width:5.87px;color:#f2f6f6;">.</div>
<div class="c" style="left:212.5px;top:358.63px;width:38.53px;color:#f2f6f6;"><i>定</i><i>位</i><i>写</i><i>出</i></div>
<div class="c n" style="left:256.0px;top:358.63px;width:5.87px;color:#d8e6e6;">(</div>
<div class="c n" style="left:259.17px;top:358.63px;width:10.53px;color:#12dede;">12</div>
<div class="c n" style="left:268.5px;top:358.63px;width:5.87px;color:#d8e6e6;">,</div>
<div class="c" style="left:277.83px;top:358.63px;width:24.53px;color:#04047c;"><i>画</i><i>板</i>1</div>
<div class="c n" style="left:301.17px;top:358.63px;width:5.87px;color:#f2f6f6;">.</div>
<div class="c" style="left:305.83px;top:358.63px;width:19.87px;color:#f2f6f6;"><i>高</i><i>度</i></div>
<div class="c o" style="left:329.17px;top:358.63px;width:10.53px;color:#14ea14;margin-left:-1px;">÷</div>
<div class="c n" style="left:343.17px;top:358.63px;width:5.87px;color:#12dede;">2</div>
<div class="c o" style="left:352.5px;top:358.63px;width:10.53px;color:#14ea14;margin-left:-1px;">−</div>
<div class="c n" style="left:366.5px;top:358.63px;width:5.87px;color:#12dede;">5</div>
<div class="c n" style="left:371.17px;top:358.63px;width:5.87px;color:#d8e6e6;">,</div>
<div class="c n" style="left:385.17px;top:358.63px;width:5.87px;color:#22d8d8;">“</div>
<div class="c n" style="left:389.83px;top:358.63px;width:5.87px;color:#22d8d8;">0</div>
<div class="c n" style="left:394.5px;top:358.63px;width:5.87px;color:#22d8d8;">”</div>
<div class="c n" style="left:403.83px;top:358.63px;width:5.87px;color:#d8e6e6;">)</div>
<div class="c" style="left:184.5px;top:371.94px;width:24.53px;color:#04047c;"><i>画</i><i>板</i>1</div>
<div class="c n" style="left:207.83px;top:371.94px;width:5.87px;color:#f2f6f6;">.</div>
<div class="c" style="left:212.5px;top:371.94px;width:38.53px;color:#f2f6f6;"><i>定</i><i>位</i><i>写</i><i>出</i></div>
<div class="c n" style="left:256.0px;top:371.94px;width:5.87px;color:#d8e6e6;">(</div>
<div class="c n" style="left:259.17px;top:371.94px;width:15.2px;color:#12dede;">180</div>
<div class="c n" style="left:273.17px;top:371.94px;width:5.87px;color:#d8e6e6;">,</div>
<div class="c" style="left:282.5px;top:371.94px;width:24.53px;color:#04047c;"><i>画</i><i>板</i>1</div>
<div class="c n" style="left:305.83px;top:371.94px;width:5.87px;color:#f2f6f6;">.</div>
<div class="c" style="left:310.5px;top:371.94px;width:19.87px;color:#f2f6f6;"><i>高</i><i>度</i></div>
<div class="c o" style="left:333.83px;top:371.94px;width:10.53px;color:#14ea14;margin-left:-1px;">÷</div>
<div class="c n" style="left:347.83px;top:371.94px;width:5.87px;color:#12dede;">2</div>
<div class="c o" style="left:357.17px;top:371.94px;width:10.53px;color:#14ea14;margin-left:-1px;">−</div>
<div class="c n" style="left:371.17px;top:371.94px;width:5.87px;color:#12dede;">5</div>
<div class="c n" style="left:375.83px;top:371.94px;width:5.87px;color:#d8e6e6;">,</div>
<div class="c n" style="left:389.83px;top:371.94px;width:5.87px;color:#22d8d8;">“</div>
<div class="c" style="left:394.5px;top:371.94px;width:10.53px;color:#22d8d8;">Π</div>
<div class="c n" style="left:403.83px;top:371.94px;width:5.87px;color:#22d8d8;">”</div>
<div class="c n" style="left:413.17px;top:371.94px;width:5.87px;color:#d8e6e6;">)</div>
<div class="c" style="left:184.5px;top:385.25px;width:24.53px;color:#04047c;"><i>画</i><i>板</i>1</div>
<div class="c n" style="left:207.83px;top:385.25px;width:5.87px;color:#f2f6f6;">.</div>
<div class="c" style="left:212.5px;top:385.25px;width:38.53px;color:#f2f6f6;"><i>定</i><i>位</i><i>写</i><i>出</i></div>
<div class="c n" style="left:256.0px;top:385.25px;width:5.87px;color:#d8e6e6;">(</div>
<div class="c n" style="left:259.17px;top:385.25px;width:15.2px;color:#12dede;">360</div>
<div class="c n" style="left:273.17px;top:385.25px;width:5.87px;color:#d8e6e6;">,</div>
<div class="c" style="left:282.5px;top:385.25px;width:24.53px;color:#04047c;"><i>画</i><i>板</i>1</div>
<div class="c n" style="left:305.83px;top:385.25px;width:5.87px;color:#f2f6f6;">.</div>
<div class="c" style="left:310.5px;top:385.25px;width:19.87px;color:#f2f6f6;"><i>高</i><i>度</i></div>
<div class="c o" style="left:333.83px;top:385.25px;width:10.53px;color:#14ea14;margin-left:-1px;">÷</div>
<div class="c n" style="left:347.83px;top:385.25px;width:5.87px;color:#12dede;">2</div>
<div class="c o" style="left:357.17px;top:385.25px;width:10.53px;color:#14ea14;margin-left:-1px;">−</div>
<div class="c n" style="left:371.17px;top:385.25px;width:5.87px;color:#12dede;">5</div>
<div class="c n" style="left:375.83px;top:385.25px;width:5.87px;color:#d8e6e6;">,</div>
<div class="c n" style="left:389.83px;top:385.25px;width:5.87px;color:#22d8d8;">“</div>
<div class="c n" style="left:394.5px;top:385.25px;width:5.87px;color:#22d8d8;">2</div>
<div class="c" style="left:399.17px;top:385.25px;width:10.53px;color:#22d8d8;">Π</div>
<div class="c n" style="left:408.5px;top:385.25px;width:5.87px;color:#22d8d8;">”</div>
<div class="c n" style="left:417.83px;top:385.25px;width:5.87px;color:#d8e6e6;">)</div>
<svg style="left:184px;top:296.58px;" width="14" height="46" viewBox="0 0 14 46"><path d="M9 2H2.5V42H9" fill="none" stroke="#b8d4d4" stroke-width=".9" stroke-dasharray="1.6 1.4"/><path d="M9 -.4L12.4 2L9 4.4Z" fill="#b8d4d4"/></svg>
<svg style="left:176px;top:363.23px;" width="6" height="4" viewBox="0 0 6 4"><path d="M.2 .2L2.2 1.9L.2 3.6ZM2.6 .2L4.6 1.9L2.6 3.6Z" fill="#a4e600"/></svg>
<svg style="left:176px;top:376.54px;" width="6" height="4" viewBox="0 0 6 4"><path d="M.2 .2L2.2 1.9L.2 3.6ZM2.6 .2L4.6 1.9L2.6 3.6Z" fill="#a4e600"/></svg>
<svg style="left:176px;top:389.85px;" width="6" height="4" viewBox="0 0 6 4"><path d="M.2 .2L2.2 1.9L.2 3.6ZM2.6 .2L4.6 1.9L2.6 3.6Z" fill="#a4e600"/></svg>
<svg style="left:157.6px;top:387.95px;" width="6" height="8" viewBox="0 0 6 8"><path d="M2.8 0V6" stroke="#000078" stroke-width=".9"/><path d="M.6 4.4L2.8 7.2L5 4.4Z" fill="#000078"/></svg>
<svg style="left:168.8px;top:388.35px;" width="6" height="6" viewBox="0 0 6 6"><path d="M0 3H5.4M2.7 .3V5.7" stroke="#a4e600" stroke-width=".8"/></svg>
<div style="left:153.5px;top:410px;width:657.5px;height:12px;background:#fafafa;"></div>
<div style="left:153.5px;top:410px;width:657.5px;height:1px;background:#e8e8e8;"></div>
<div style="left:157.5px;top:410.5px;width:11px;height:11px;background:#f0f0f0;border:0.7px solid #fff;border-right-color:#6e6e6e;border-bottom-color:#6e6e6e;"></div>
<svg style="left:160.6px;top:413.2px;" width="4" height="6" viewBox="0 0 4 6"><path d="M3.6 0V5.6L.4 2.8Z" fill="#000"/></svg>
<div style="left:168.5px;top:410.5px;width:11.5px;height:11px;background:#f0f0f0;border:0.7px solid #fff;border-right-color:#6e6e6e;border-bottom-color:#6e6e6e;"></div>
<div style="left:153.5px;top:410.5px;width:4px;height:11px;background:#f0f0f0;border-right:0.7px solid #8a8a8a;"></div>
<div style="left:148.5px;top:422px;width:875.5px;height:1.2px;background:#7e7e7e;"></div>
<div style="left:148.5px;top:423.2px;width:875.5px;height:14.5px;background:#f0f0f0;"></div>
<svg style="left:150px;top:423px;" width="150" height="14" viewBox="0 0 150 14"><path d="M4 .6L10 12.8H96.3L100.6 .6" fill="#fff" stroke="#1e1e1e" stroke-width=".9"/><path d="M100.4 .6H4.2" stroke="#fff" stroke-width="1.4"/><path d="M96.6 12.8H144.5L149.6 .6" fill="none" stroke="#3c3c3c" stroke-width=".9"/><path d="M97.4 9.6L99.4 12.6" stroke="#3c3c3c" stroke-width=".9"/></svg>
<div class="t" style="left:160.8px;top:423.2px;font-size:8.6px;line-height:13.6px;height:13.6px;color:#000;width:84px;font-weight:bold;letter-spacing:-0.3px;"><i>窗</i><i>口</i><i>程</i><i>序</i><i>集</i>_<i>启</i><i>动</i><i>窗</i><i>口</i></div>
<div class="t" style="left:254.4px;top:423.5px;font-size:8px;line-height:13px;height:13px;color:#1414b4;width:38px;">_<i>启</i><i>动</i><i>窗</i><i>口</i></div>
<div style="left:811px;top:80.5px;width:213px;height:342px;background:#f0f0f0;"></div>
<div style="left:811px;top:80.5px;width:213px;height:1px;background:#8c8c8c;"></div>
<div style="left:798.5px;top:81.5px;width:12px;height:12.5px;background:#fbfbfb;border:0.6px solid #d8d8d8;"></div>
<svg style="left:800.8px;top:84.4px;" width="8" height="7" viewBox="0 0 8 7"><path d="M.6 .3L3.4 3.4L.6 6.5M4.2 .3L7 3.4L4.2 6.5" fill="none" stroke="#4a4a4a" stroke-width=".8"/></svg>
<div class="t" style="left:820px;top:81.3px;font-size:8.4px;line-height:13.4px;height:13.4px;color:#000;width:22px;word-spacing:2px;"><i>变</i> <i>量</i></div>
<div style="left:848.8px;top:82.5px;width:1px;height:12px;background:#8a8a8a;"></div>
<div style="left:849.8px;top:82.5px;width:1px;height:12px;background:#ffffff;"></div>
<div class="t" style="left:856px;top:81.9px;font-size:8.4px;line-height:13.4px;height:13.4px;color:#222;width:26px;"><i>子</i><i>程</i><i>序</i></div>
<div style="left:887.6px;top:83.5px;width:1px;height:11px;background:#8a8a8a;"></div>
<div style="left:888.6px;top:83.5px;width:1px;height:11px;background:#ffffff;"></div>
<div style="left:813.8px;top:96.8px;width:197px;height:15.4px;background:#ffffff;"></div>
<div style="left:811.8px;top:114.4px;width:199px;height:295px;background:#ffffff;"></div>
<svg style="left:817.5px;top:99.5px;" width="10" height="10" viewBox="0 0 10 10"><circle cx="5.8" cy="3.8" r="2.7" fill="#fff" stroke="#2f6fd0" stroke-width="1.3"/><path d="M3.8 5.8L.9 8.9" stroke="#2f6fd0" stroke-width="1.6" stroke-linecap="round"/></svg>
<div style="left:1010.5px;top:96px;width:1px;height:314px;background:#8a8a8a;"></div>
<div style="left:811.5px;top:409px;width:200px;height:1px;background:#8a8a8a;"></div>
<div style="left:820px;top:118.5px;width:7px;height:1px;background:#b8b8b8;"></div>
<div style="left:820px;top:118.5px;width:1px;height:8px;background:#b8b8b8;"></div>
<div style="left:832.5px;top:147px;width:1px;height:6.5px;background:#b8b8b8;"></div>
<div style="left:832.5px;top:153px;width:7px;height:1px;background:#b8b8b8;"></div>
<svg style="left:827px;top:114.5px;" width="11" height="11" viewBox="0 0 11 11"><rect x="1.4" y=".5" width="9" height="7.5" fill="#fff" stroke="#333" stroke-width=".8"/><rect x="1.7" y=".8" width="8.4" height="1.8" fill="#1c2ab0"/><rect x=".6" y="3.6" width="4" height="5.5" fill="#d6c84a" stroke="#555" stroke-width=".6"/><rect x="4.4" y="4.4" width="5.6" height="4" fill="#cfcfcf" stroke="#555" stroke-width=".6"/><rect x="2" y="6.6" width="2" height="2" fill="#2a36e0"/></svg>
<svg style="left:826.5px;top:126.5px;" width="12" height="10" viewBox="0 0 12 10"><path d="M1 5.4L6.6 2L11 4L5.2 7.6Z" fill="#f4f4f4" stroke="#333" stroke-width=".8"/><path d="M1 5.4V7.2L5.2 9.6V7.6M5.2 9.6L11 5.8V4" fill="#bdbdbd" stroke="#333" stroke-width=".8"/><path d="M3 4.6L8.4 1.2" stroke="#333" stroke-width=".7"/></svg>
<svg style="left:828.5px;top:138px;" width="8" height="8" viewBox="0 0 8 8"><path d="M.8 1.6V6.4C.8 7.8 6.2 7.8 6.2 6.4V1.6" fill="#222" stroke="#111" stroke-width=".8"/><ellipse cx="3.5" cy="1.7" rx="2.7" ry="1.2" fill="#f2e84a" stroke="#111" stroke-width=".7"/><rect x="2.6" y="3.8" width="2.2" height="2.4" fill="#fff"/></svg>
<div class="t" style="left:840.5px;top:114.2px;font-size:8.2px;line-height:13.2px;height:13.2px;color:#000;width:66px;font-weight:bold;word-spacing:1.6px;"><i>程</i><i>序</i><i>集</i><i>变</i><i>量</i> <i>–</i> 0</div>
<div class="t" style="left:840.5px;top:124.7px;font-size:8.2px;line-height:13.2px;height:13.2px;color:#000;width:66px;font-weight:bold;word-spacing:1.6px;"><i>子</i><i>程</i><i>序</i><i>参</i><i>数</i> <i>–</i> 0</div>
<div class="t" style="left:840.5px;top:135.2px;font-size:8.2px;line-height:13.2px;height:13.2px;color:#000;width:58px;font-weight:bold;word-spacing:1.6px;"><i>局</i><i>部</i><i>变</i><i>量</i> <i>–</i> 1</div>
<div class="t" style="left:840px;top:146.2px;font-size:8.6px;line-height:13.6px;height:13.6px;color:#ff5a28;width:10px;font-weight:bold;"><i>整</i></div>
<div class="t" style="left:853px;top:146.4px;font-size:8.2px;line-height:13.2px;height:13.2px;color:#111;width:38px;"><i>局</i><i>部</i>_<i>角</i><i>度</i></div>
<div style="left:1011.5px;top:82.5px;width:11px;height:340px;background:#f3f3f3;"></div>
<div style="left:1011.5px;top:83px;width:10.5px;height:12.5px;background:#f0f0f0;border:0.7px solid #fff;border-right-color:#6e6e6e;border-bottom-color:#6e6e6e;"></div>
<svg style="left:1014px;top:87.6px;" width="6" height="4" viewBox="0 0 6 4"><path d="M0 3.2H5.6L2.8 0Z" fill="#000"/></svg>
<div style="left:1011.5px;top:95.5px;width:10.5px;height:12.5px;background:#f0f0f0;border:0.7px solid #fff;border-right-color:#6e6e6e;border-bottom-color:#6e6e6e;"></div>
<div style="left:1011px;top:399.5px;width:11px;height:10.5px;background:#f0f0f0;border:0.7px solid #fff;border-right-color:#6e6e6e;border-bottom-color:#6e6e6e;"></div>
<svg style="left:1013.6px;top:403.4px;" width="6" height="4" viewBox="0 0 6 4"><path d="M0 0H5.6L2.8 3.2Z" fill="#000"/></svg>
<div style="left:811px;top:410.5px;width:200px;height:11.5px;background:#f6f6f6;"></div>
<div style="left:1000.5px;top:411px;width:10px;height:10.5px;background:#f0f0f0;border:0.7px solid #fff;border-right-color:#6e6e6e;border-bottom-color:#6e6e6e;"></div>
<svg style="left:1004px;top:413.4px;" width="4" height="6" viewBox="0 0 4 6"><path d="M.4 0V5.6L3.6 2.8Z" fill="#000"/></svg>
<div style="left:811px;top:422.6px;width:213px;height:1.1px;background:#9a9a9a;"></div>
<div style="left:530px;top:122px;width:302px;height:256px;background:radial-gradient(closest-side,rgba(0,0,0,.16),rgba(0,0,0,0));"></div>
<div style="left:533px;top:124.5px;width:296px;height:249px;box-shadow:0 1px 5px rgba(0,0,0,.35);background:rgba(0,0,0,.12);"></div>
<div style="left:534.8px;top:125.8px;width:291.7px;height:245.6px;background:#f0f0f0;border:0.6px solid #b9c4c4;"></div>
<div style="left:535.3px;top:126.3px;width:290.7px;height:17px;background:#ffffff;"></div>
<svg style="left:537px;top:128px;" width="11.5" height="11.5" viewBox="0 0 11.5 11.5"><rect x="0" y="0" width="11.5" height="11.5" rx="1.6" fill="#24a3a3"/><path d="M1.6 2.3H9.9" stroke="#8fd6d6" stroke-width=".9"/><path d="M2 8L6.6 3.8M3.3 9.6L8.6 4.8M5.6 10L9.6 6.4" stroke="#e9fbfb" stroke-width=".9" fill="none"/></svg>
<svg style="left:744px;top:130px;" width="72" height="9" viewBox="0 0 72 9"><path d="M.6 4.2H7" stroke="#a9a9a9" stroke-width=".9"/><rect x="31.2" y="1.2" width="6.4" height="6.4" fill="none" stroke="#dedede" stroke-width=".8"/><path d="M63 1L69.6 7.6M69.6 1L63 7.6" stroke="#9b9b9b" stroke-width=".8"/></svg>
<div style="left:542.2px;top:153px;width:276px;height:180.5px;background:#f0f0f0;border:1px solid #6e6e6e;border-right-color:#fbfbfb;border-bottom-color:#fbfbfb;"></div>
<svg style="left:535px;top:126px;" width="292" height="246" viewBox="0 0 292 246"><g transform="translate(-535 -126)"><path d="M550.2 161V328.6" stroke="#4a4a4a" stroke-width="1"/><path d="M546.6 161.2H553.6L550.1 154.4Z" fill="#f4f4f4" stroke="#3c3c3c" stroke-width=".8"/><path d="M550 238.2H812" stroke="#4a4a4a" stroke-width="1"/><path d="M812 234.8V241.4L817 238.1Z" fill="#f4f4f4" stroke="#3c3c3c" stroke-width=".8"/><path d="M550.3 238.2L552.3 235.4L554.3 232.6L556.3 229.9L558.3 227.1L560.3 224.4L562.3 221.7L564.3 219.1L566.3 216.5L568.3 214.0L570.3 211.5L572.3 209.2L574.3 206.9L576.3 204.7L578.3 202.5L580.3 200.5L582.3 198.6L584.3 196.8L586.3 195.1L588.3 193.5L590.3 192.0L592.3 190.7L594.3 189.5L596.3 188.4L598.3 187.5L600.3 186.7L602.3 186.1L604.3 185.6L606.3 185.2L608.3 185.0L610.3 184.9L612.3 185.0L614.3 185.2L616.3 185.6L618.3 186.1L620.3 186.7L622.3 187.5L624.3 188.4L626.3 189.5L628.3 190.7L630.3 192.0L632.3 193.5L634.3 195.1L636.3 196.8L638.3 198.6L640.3 200.5L642.3 202.5L644.3 204.7L646.3 206.9L648.3 209.2L650.3 211.5L652.3 214.0L654.3 216.5L656.3 219.1L658.3 221.7L660.3 224.4L662.3 227.1L664.3 229.9L666.3 232.6L668.3 235.4L670.3 238.2L672.3 241.0L674.3 243.8L676.3 246.5L678.3 249.3L680.3 252.0L682.3 254.7L684.3 257.3L686.3 259.9L688.3 262.4L690.3 264.9L692.3 267.2L694.3 269.5L696.3 271.7L698.3 273.9L700.3 275.9L702.3 277.8L704.3 279.6L706.3 281.3L708.3 282.9L710.3 284.4L712.3 285.7L714.3 286.9L716.3 288.0L718.3 288.9L720.3 289.7L722.3 290.3L724.3 290.8L726.3 291.2L728.3 291.4L730.3 291.5L732.3 291.4L734.3 291.2L736.3 290.8L738.3 290.3L740.3 289.7L742.3 288.9L744.3 288.0L746.3 286.9L748.3 285.7L750.3 284.4L752.3 282.9L754.3 281.3L756.3 279.6L758.3 277.8L760.3 275.9L762.3 273.9L764.3 271.7L766.3 269.5L768.3 267.2L770.3 264.9L772.3 262.4L774.3 259.9L776.3 257.3L778.3 254.7L780.3 252.0L782.3 249.3L784.3 246.5L786.3 243.8L788.3 241.0L790.3 238.2" fill="none" stroke="#f4605c" stroke-width=".85"/></g></svg>
<div class="t" style="left:551px;top:239.1px;font-size:7.4px;line-height:12.4px;height:12.4px;color:#222;width:6px;font-family:"Liberation Serif",sans-serif;">0</div>
<div class="t" style="left:663.6px;top:238.3px;font-size:7.6px;line-height:12.6px;height:12.6px;color:#111;width:8px;font-weight:bold;font-family:"Liberation Serif",sans-serif;">Π</div>
<div class="t" style="left:783.4px;top:238.6px;font-size:7.4px;line-height:12.4px;height:12.4px;color:#222;width:5px;font-family:"Liberation Serif",sans-serif;">2</div>
<div class="t" style="left:787.6px;top:238.3px;font-size:7.6px;line-height:12.6px;height:12.6px;color:#111;width:8px;font-weight:bold;font-family:"Liberation Serif",sans-serif;">Π</div>
<div style="left:733px;top:341px;width:68px;height:24.6px;background:#e1e1e1;border:0.8px solid #adadad;"></div>
<div class="t" style="left:759px;top:347.1px;font-size:8px;line-height:13px;height:13px;color:#000;width:18px;"><i>按</i><i>钮</i></div>
<div style="left:0px;top:436.6px;width:1024px;height:1px;background:#d2d2d2;"></div>
<div style="left:0px;top:437.6px;width:1024px;height:1px;background:#fbfbfb;"></div>
<div style="left:0px;top:439.4px;width:1024px;height:1px;background:#dadada;"></div>
<div style="left:0px;top:440.4px;width:1024px;height:1px;background:#fcfcfc;"></div>
<div style="left:2.6px;top:443.2px;width:7.4px;height:7.2px;background:#f0f0f0;border:0.6px solid #fff;border-right-color:#6a6a6a;border-bottom-color:#6a6a6a;"></div>
<div style="left:2.6px;top:451.8px;width:7.4px;height:7.2px;background:#f0f0f0;border:0.6px solid #fff;border-right-color:#6a6a6a;border-bottom-color:#6a6a6a;"></div>
<svg style="left:2.6px;top:443.2px;" width="8" height="16" viewBox="0 0 8 16"><path d="M2 1.8L5 4.8M5 1.8L2 4.8" stroke="#000" stroke-width="1.1"/><rect x="2" y="10.6" width="3" height="3" fill="none" stroke="#000" stroke-width="1"/></svg>
<div style="left:6.5px;top:460px;width:1px;height:82px;background:#b4b4b4;"></div>
<div style="left:7.5px;top:460px;width:1px;height:82px;background:#ffffff;"></div>
<div style="left:14.5px;top:443.5px;width:36.5px;height:13px;background:#f6f6f6;"></div>
<div style="left:51.5px;top:442.5px;width:40.5px;height:15px;background:#f0f0f0;border-right:1px solid #6a6a6a;border-left:1px solid #fff;border-top:1px solid #fff;"></div>
<div style="left:136.5px;top:443.5px;width:1px;height:12.5px;background:#8a8a8a;"></div>
<div style="left:137.5px;top:443.5px;width:1px;height:12.5px;background:#ffffff;"></div>
<div style="left:183.2px;top:443.5px;width:1px;height:12.5px;background:#8a8a8a;"></div>
<div style="left:184.2px;top:443.5px;width:1px;height:12.5px;background:#ffffff;"></div>
<div style="left:229.6px;top:443.5px;width:1px;height:12.5px;background:#8a8a8a;"></div>
<div style="left:230.6px;top:443.5px;width:1px;height:12.5px;background:#ffffff;"></div>
<div style="left:272.6px;top:443.5px;width:1px;height:12.5px;background:#8a8a8a;"></div>
<div style="left:273.6px;top:443.5px;width:1px;height:12.5px;background:#ffffff;"></div>
<div style="left:315.6px;top:443.5px;width:1px;height:12.5px;background:#8a8a8a;"></div>
<div style="left:316.6px;top:443.5px;width:1px;height:12.5px;background:#ffffff;"></div>
<div style="left:370.4px;top:443.5px;width:1px;height:12.5px;background:#8a8a8a;"></div>
<div style="left:371.4px;top:443.5px;width:1px;height:12.5px;background:#ffffff;"></div>
<div style="left:423.6px;top:443.5px;width:1px;height:12.5px;background:#8a8a8a;"></div>
<div style="left:424.6px;top:443.5px;width:1px;height:12.5px;background:#ffffff;"></div>
<svg style="left:18.5px;top:444px;" width="8" height="11" viewBox="0 0 8 11"><path d="M1.6 3.2C1.6 .2 6.4 .2 6.4 3.2C6.4 5 4 5 4 7" fill="none" stroke="#7a6a00" stroke-width="2.4"/><path d="M1.6 3.2C1.6 .2 6.4 .2 6.4 3.2C6.4 5 4 5 4 7" fill="none" stroke="#f6e21a" stroke-width="1.3"/><circle cx="4" cy="9.4" r="1.1" fill="#f6e21a" stroke="#7a6a00" stroke-width=".5"/></svg>
<div class="t" style="left:32px;top:443.9px;font-size:8px;line-height:13px;height:13px;color:#222;width:18px;"><i>提</i><i>示</i></div>
<svg style="left:57px;top:443px;" width="9" height="10" viewBox="0 0 9 10"><rect x=".6" y=".6" width="7.6" height="8.4" fill="#fff" stroke="#333" stroke-width=".8"/><rect x=".9" y=".9" width="7" height="1.7" fill="#1c2ab0"/><path d="M2 4.4H5M2 6.2H4.2" stroke="#333" stroke-width=".7"/></svg>
<div class="t" style="left:70.5px;top:442.5px;font-size:8px;line-height:13px;height:13px;color:#000;width:18px;"><i>输</i><i>出</i></div>
<svg style="left:95.5px;top:444.5px;" width="9" height="10" viewBox="0 0 9 10"><path d="M1.4 .6V9M4.4 .6V9M7.4 .6V9" stroke="#333" stroke-width="1"/><path d="M0 3H9M0 5.6H9" stroke="#8a94e0" stroke-width=".6"/></svg>
<div class="t" style="left:108.7px;top:443.9px;font-size:8px;line-height:13px;height:13px;color:#222;width:26px;"><i>调</i><i>用</i><i>表</i></div>
<svg style="left:141px;top:443.5px;" width="11" height="11" viewBox="0 0 11 11"><circle cx="4.4" cy="4.4" r="3.4" fill="#fafafa" stroke="#222" stroke-width=".9"/><path d="M6.8 6.8L10.2 10.2" stroke="#222" stroke-width="1.5"/></svg>
<div class="t" style="left:156px;top:443.9px;font-size:8px;line-height:13px;height:13px;color:#222;width:26px;"><i>监</i><i>视</i><i>表</i></div>
<svg style="left:187.5px;top:445.5px;" width="11" height="8" viewBox="0 0 11 8"><path d="M3 .6L5.4 3.2L3 5.8L.6 3.2Z" fill="#f2e21a" stroke="#222" stroke-width=".7"/><path d="M7.8 .6L10.2 3.2L7.8 5.8L5.4 3.2Z" fill="#fff" stroke="#222" stroke-width=".7"/><path d="M5.4 5.2L6.6 6.4L5.4 7.6L4.2 6.4Z" fill="#666"/></svg>
<div class="t" style="left:202.6px;top:443.9px;font-size:8px;line-height:13px;height:13px;color:#222;width:26px;"><i>变</i><i>量</i><i>表</i></div>
<svg style="left:233.5px;top:444px;" width="10" height="10" viewBox="0 0 10 10"><rect x=".6" y=".8" width="7" height="7.4" fill="#d6d6d6" stroke="#222" stroke-width=".8"/><path d="M1.8 2.6H6M1.8 4.2H6" stroke="#555" stroke-width=".6"/><circle cx="5" cy="4.8" r="2.2" fill="#f3f3f3" stroke="#222" stroke-width=".8"/><path d="M6.8 6.6L9.6 9.6" stroke="#222" stroke-width="1.4"/></svg>
<div class="t" style="left:249px;top:443.9px;font-size:8px;line-height:13px;height:13px;color:#222;width:21px;"><i>搜</i><i>寻</i>1</div>
<svg style="left:277px;top:444px;" width="10" height="10" viewBox="0 0 10 10"><rect x=".6" y=".8" width="7" height="7.4" fill="#d6d6d6" stroke="#222" stroke-width=".8"/><path d="M1.8 2.6H6M1.8 4.2H6" stroke="#555" stroke-width=".6"/><circle cx="5" cy="4.8" r="2.2" fill="#f3f3f3" stroke="#222" stroke-width=".8"/><path d="M6.8 6.6L9.6 9.6" stroke="#222" stroke-width="1.4"/></svg>
<div class="t" style="left:291.6px;top:443.9px;font-size:8px;line-height:13px;height:13px;color:#222;width:21px;"><i>搜</i><i>寻</i>2</div>
<svg style="left:321.5px;top:444.5px;" width="9" height="10" viewBox="0 0 9 10"><rect x=".8" y=".8" width="7" height="8.2" fill="#f6f6f6" stroke="#333" stroke-width=".8"/><path d="M2.2 3H6.4M2.2 4.8H6.4M2.2 6.6H5" stroke="#555" stroke-width=".6"/><rect x="0" y="2.4" width="2" height="4.8" fill="#333"/></svg>
<div class="t" style="left:334.3px;top:443.9px;font-size:8px;line-height:13px;height:13px;color:#222;width:34px;"><i>剪</i><i>辑</i><i>历</i><i>史</i></div>
<svg style="left:374px;top:444px;" width="11" height="11" viewBox="0 0 11 11"><path d="M.4 1.4H8.2M.4 4.2H8.2M.4 7H6" stroke="#1f5fc0" stroke-width="1.5"/><circle cx="8.4" cy="8" r="2.2" fill="#1a8f86"/></svg>
<div class="t" style="left:388.8px;top:443.9px;font-size:8px;line-height:13px;height:13px;color:#222;width:34px;"><i>备</i><i>份</i><i>管</i><i>理</i></div>
<div style="left:13.8px;top:459px;width:1006.8px;height:85.4px;background:#ffffff;border:1px solid #7e7e7e;border-right-color:#8e8e8e;border-bottom-color:#8e8e8e;"></div>
<div style="left:14.8px;top:460px;width:991.1px;height:80.2px;background:#008080;"></div>
<div style="left:1005.9px;top:460px;width:11.7px;height:80.2px;background:#f0f0f0;"></div>
<svg style="left:1008.4px;top:463.5px;" width="7" height="74" viewBox="0 0 7 74"><path d="M.9 4.4L3.5 1.8L6.1 4.4" fill="none" stroke="#505050" stroke-width="1.2"/><path d="M.9 70L3.5 72.6L6.1 70" fill="none" stroke="#505050" stroke-width="1.2"/></svg>
<div style="left:1007px;top:518px;width:9.3px;height:10.6px;background:#cdcdcd;"></div>
<div class="t" style="left:15.6px;top:460.8px;font-size:10.67px;line-height:12px;height:12px;color:#f4f8f8;width:150.39999999999998px;letter-spacing:-0.2px;"><i>正</i><i>在</i><i>统</i><i>计</i><i>需</i><i>要</i><i>编</i><i>译</i><i>的</i><i>子</i><i>程</i><i>序</i></div>
<div class="t" style="left:15.6px;top:471.52px;font-size:10.67px;line-height:12px;height:12px;color:#f4f8f8;width:89.39999999999999px;letter-spacing:-0.2px;"><i>正</i><i>在</i><i>编</i><i>译</i>...</div>
<div class="t" style="left:15.6px;top:482.24px;font-size:10.67px;line-height:12px;height:12px;color:#f4f8f8;width:138.2px;letter-spacing:-0.2px;"><i>正</i><i>在</i><i>生</i><i>成</i><i>主</i><i>程</i><i>序</i><i>入</i><i>口</i><i>代</i><i>码</i></div>
<div class="t" style="left:15.6px;top:492.96px;font-size:10.67px;line-height:12px;height:12px;color:#f4f8f8;width:101.6px;letter-spacing:-0.2px;"><i>程</i><i>序</i><i>代</i><i>码</i><i>编</i><i>译</i><i>成</i><i>功</i></div>
<div class="t" style="left:15.6px;top:503.68px;font-size:10.67px;line-height:12px;height:12px;color:#f4f8f8;width:138.2px;letter-spacing:-0.2px;"><i>正</i><i>在</i><i>封</i><i>装</i><i>易</i><i>格</i><i>式</i><i>目</i><i>的</i><i>代</i><i>码</i></div>
<div class="t" style="left:15.6px;top:514.4px;font-size:10.67px;line-height:12px;height:12px;color:#f4f8f8;width:113.8px;letter-spacing:-0.2px;"><i>开</i><i>始</i><i>运</i><i>行</i><i>被</i><i>调</i><i>试</i><i>程</i><i>序</i></div>
<div style="left:0px;top:546.6px;width:1024px;height:1px;background:#e6e6e6;"></div>
<div style="left:1019.4px;top:302.2px;width:9px;height:178.4px;background:#f1f1f1;border:1px solid #bdbdbd;border-radius:3.5px 0 0 3.5px;"></div>
</div>
</body>
</html>
